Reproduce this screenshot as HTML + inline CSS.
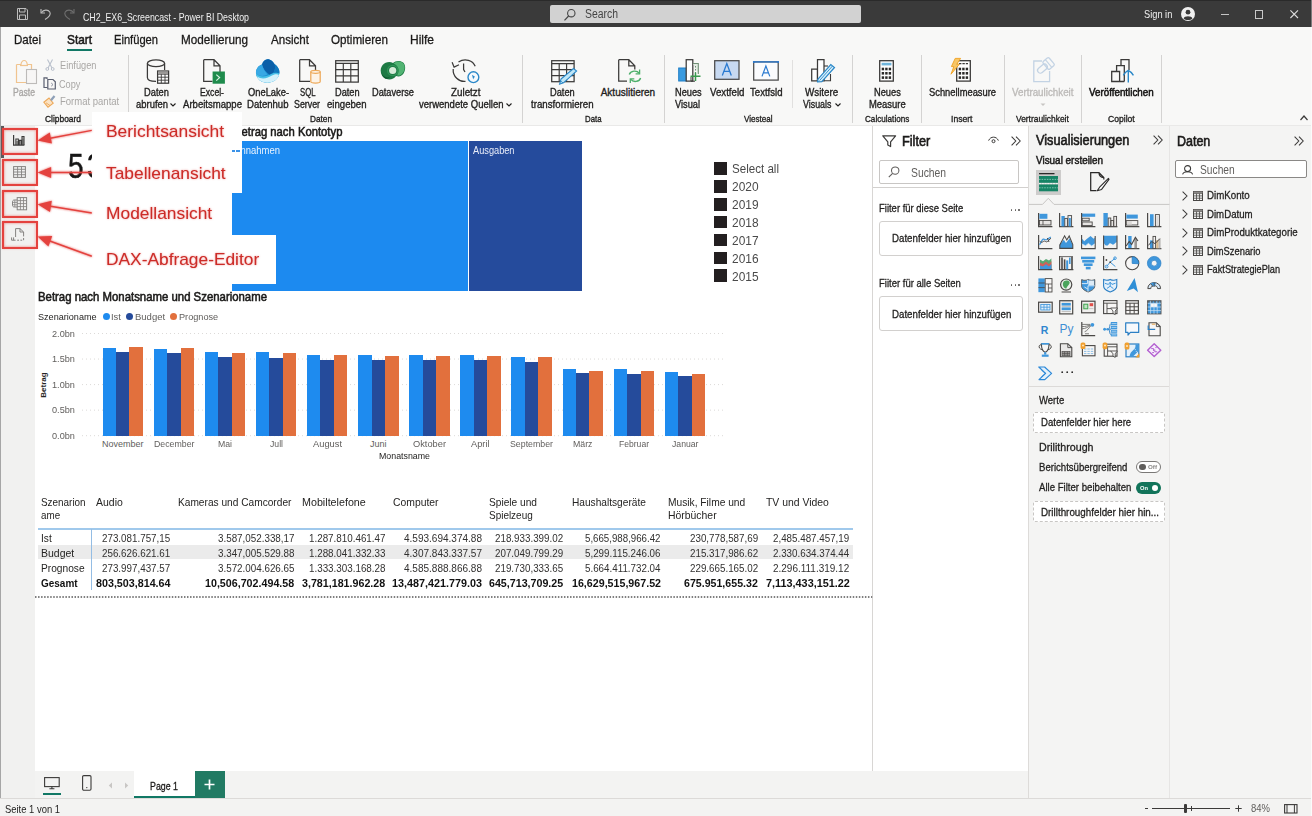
<!DOCTYPE html>
<html lang="de"><head><meta charset="utf-8"><title>CH2_EX6_Screencast - Power BI Desktop</title>
<style>
html,body{margin:0;padding:0;}
body{width:1312px;height:816px;overflow:hidden;position:relative;background:#f3f2f1;font-family:"Liberation Sans",sans-serif;}
.r{position:absolute;box-sizing:border-box;}
.t{position:absolute;white-space:nowrap;transform-origin:0 50%;}
svg{overflow:visible;}
</style></head><body>
<div class="r" style="left:0px;top:0px;width:1312px;height:27px;background:#3a3a3a;"></div>
<div class="r" style="left:0px;top:0px;width:1312px;height:1px;background:#2a2a2a;"></div>
<span class="t" style="left:83.00px;top:10.50px;font-size:10.5px;line-height:12.60px;color:#f0f0f0;transform:scaleX(0.8366);">CH2_EX6_Screencast - Power BI Desktop</span>
<div class="r" style="left:550px;top:4.6px;width:311px;height:18.3px;background:#d2d2d2;border-radius:2px;"></div>
<span class="t" style="left:585.00px;top:6.90px;font-size:12px;line-height:14.40px;color:#444;transform:scaleX(0.8679);">Search</span>
<svg class="r" style="left:563px;top:7.6px;" width="14" height="14" viewBox="0 0 14 14"><circle cx="8.3" cy="5.2" r="3.7" fill="none" stroke="#444" stroke-width="1.1"/><path d="M5.6 8 L1.5 12.3" stroke="#444" stroke-width="1.2" fill="none"/></svg>
<span class="t" style="left:1144.10px;top:8.20px;font-size:11px;line-height:13.20px;color:#f0f0f0;transform:scaleX(0.8414);">Sign in</span>
<svg class="r" style="left:1180.3px;top:6.4px;" width="16" height="16" viewBox="0 0 16 16"><circle cx="8" cy="8" r="7" fill="#f0f0f0"/><circle cx="8" cy="6.2" r="2.4" fill="#3a3a3a"/><path d="M3.6 12.6 C4.2 9.6 11.8 9.6 12.4 12.6 C10.5 14.6 5.5 14.6 3.6 12.6Z" fill="#3a3a3a"/></svg>
<div class="r" style="left:1221px;top:13.7px;width:8px;height:1.1px;background:#c4c4c4;"></div>
<div class="r" style="left:1254.8px;top:10.4px;width:8.2px;height:8.2px;border:1.2px solid #c8c8c8;"></div>
<svg class="r" style="left:1289.7px;top:10.4px;" width="8.4" height="8.4" viewBox="0 0 8.4 8.4"><path d="M0.4 0.4 L8 8 M8 0.4 L0.4 8" stroke="#dcdcdc" stroke-width="1.1"/></svg>
<svg class="r" style="left:17px;top:8px;" width="11" height="12" viewBox="0 0 11 12"><path d="M0.5 0.5 H9 L10.5 2 V11.5 H0.5 Z M2.5 0.5 V4 H8 V0.5 M2.5 11.5 V7 H8.5 V11.5" fill="none" stroke="#bdbdbd" stroke-width="1"/></svg>
<svg class="r" style="left:40px;top:8px;" width="12" height="12" viewBox="0 0 12 12"><path d="M1 1 V5 H5" fill="none" stroke="#bdbdbd" stroke-width="1.1"/><path d="M1.3 4.8 C3.5 1.5 8 1.2 9.8 4 C11.2 6.5 9 9 5 11.5" fill="none" stroke="#bdbdbd" stroke-width="1.1"/></svg>
<svg class="r" style="left:63px;top:8px;" width="12" height="12" viewBox="0 0 12 12"><path d="M11 1 V5 H7" fill="none" stroke="#6e6e6e" stroke-width="1.1"/><path d="M10.7 4.8 C8.5 1.5 4 1.2 2.2 4 C0.8 6.5 3 9 7 11.5" fill="none" stroke="#6e6e6e" stroke-width="1.1"/></svg>
<div class="r" style="left:0px;top:27px;width:1312px;height:99px;background:#f8f8f7;"></div>
<span class="t" style="left:14.00px;top:32.10px;font-size:13px;line-height:15.60px;color:#1b1a19;transform:scaleX(0.8897);-webkit-text-stroke:0.3px #1b1a19;">Datei</span>
<span class="t" style="left:67.00px;top:32.10px;font-size:13px;line-height:15.60px;color:#1b1a19;transform:scaleX(0.9106);-webkit-text-stroke:0.55px #1b1a19;">Start</span>
<span class="t" style="left:114.00px;top:32.10px;font-size:13px;line-height:15.60px;color:#1b1a19;transform:scaleX(0.8574);-webkit-text-stroke:0.3px #1b1a19;">Einfügen</span>
<span class="t" style="left:181.00px;top:32.10px;font-size:13px;line-height:15.60px;color:#1b1a19;transform:scaleX(0.9002);-webkit-text-stroke:0.3px #1b1a19;">Modellierung</span>
<span class="t" style="left:271.00px;top:32.10px;font-size:13px;line-height:15.60px;color:#1b1a19;transform:scaleX(0.8914);-webkit-text-stroke:0.3px #1b1a19;">Ansicht</span>
<span class="t" style="left:331.00px;top:32.10px;font-size:13px;line-height:15.60px;color:#1b1a19;transform:scaleX(0.8966);-webkit-text-stroke:0.3px #1b1a19;">Optimieren</span>
<span class="t" style="left:410.00px;top:32.10px;font-size:13px;line-height:15.60px;color:#1b1a19;transform:scaleX(0.9229);-webkit-text-stroke:0.3px #1b1a19;">Hilfe</span>
<div class="r" style="left:67.3px;top:49.1px;width:25px;height:2px;background:#117865;"></div>
<div class="r" style="left:0px;top:124.5px;width:1312px;height:2.2px;background:linear-gradient(#efefee,#d9d8d7);"></div>
<div class="r" style="left:128px;top:55px;width:1px;height:67.5px;background:#d4d3d2;"></div>
<div class="r" style="left:522px;top:55px;width:1px;height:67.5px;background:#d4d3d2;"></div>
<div class="r" style="left:664px;top:55px;width:1px;height:67.5px;background:#d4d3d2;"></div>
<div class="r" style="left:852px;top:55px;width:1px;height:67.5px;background:#d4d3d2;"></div>
<div class="r" style="left:921px;top:55px;width:1px;height:67.5px;background:#d4d3d2;"></div>
<div class="r" style="left:1004px;top:55px;width:1px;height:67.5px;background:#d4d3d2;"></div>
<div class="r" style="left:1080.5px;top:55px;width:1px;height:67.5px;background:#d4d3d2;"></div>
<div class="r" style="left:1161px;top:55px;width:1px;height:67.5px;background:#d4d3d2;"></div>
<div class="r" style="left:792.2px;top:59.5px;width:1px;height:48px;background:#e1e0df;"></div>
<div class="r" style="left:0px;top:126px;width:36px;height:672px;background:#f1f1f0;"></div>
<div class="r" style="left:0px;top:27px;width:1px;height:789px;background:#a6a6a6;"></div>
<div class="r" style="left:1px;top:126px;width:2.6px;height:32px;background:#555a5c;"></div>
<div class="r" style="left:34.6px;top:126px;width:837.4px;height:645.2px;background:#ffffff;"></div>
<div class="r" style="left:872px;top:126px;width:1px;height:672px;background:#d8d6d4;"></div>
<div class="r" style="left:873px;top:126px;width:155px;height:645.2px;background:#ffffff;"></div>
<div class="r" style="left:1028px;top:126px;width:1px;height:672px;background:#dddbd9;"></div>
<div class="r" style="left:1029px;top:126px;width:283px;height:672px;background:#f4f4f3;"></div>
<div class="r" style="left:1169px;top:126px;width:1px;height:672px;background:#e6e5e4;"></div>
<div class="r" style="left:34.6px;top:771.2px;width:993.4px;height:27px;background:#f3f3f2;"></div>
<div class="r" style="left:0px;top:798px;width:1312px;height:18px;background:#f3f3f2;"></div>
<div class="r" style="left:0px;top:798.2px;width:1312px;height:1px;background:#dcdad8;"></div>
<div class="r" style="left:1310.6px;top:0px;width:1.4px;height:27px;background:#7c7c7c;"></div>
<div class="r" style="left:1310.8px;top:27px;width:1.2px;height:789px;background:#fbfbfb;"></div>
<svg class="r" style="left:15px;top:59px;" width="23" height="26" viewBox="0 0 23 26"><path d="M1.5 5.5 H6 C6 3.5 7.5 1.5 9.2 1.5 C11 1.5 12 3.5 12.3 5.5 H16.5 V10 M1.5 5.5 V23.5 H11" fill="none" stroke="#f0c48f" stroke-width="1.2"/><path d="M5 6.5 H13" stroke="#f0c48f" stroke-width="1.2"/><rect x="11.5" y="10.5" width="10" height="14" fill="#f7f6f5" stroke="#bdbbb9" stroke-width="1.1"/></svg>
<span class="t" style="left:13.30px;top:86.50px;font-size:10px;line-height:12.00px;color:#a9a7a5;transform:scaleX(0.8603);-webkit-text-stroke:0.33px #a9a7a5;">Paste</span>
<svg class="r" style="left:45px;top:59px;" width="10" height="12" viewBox="0 0 10 12"><path d="M2.5 0.5 L7 9 M7.5 0.5 L3 9" stroke="#b9c0cc" stroke-width="1.1" fill="none"/><circle cx="2.3" cy="10" r="1.4" fill="none" stroke="#b9c0cc" stroke-width="1"/><circle cx="7.7" cy="10" r="1.4" fill="none" stroke="#b9c0cc" stroke-width="1"/></svg>
<span class="t" style="left:59.70px;top:59.80px;font-size:10px;line-height:12.00px;color:#a9a7a5;transform:scaleX(0.9220);">Einfügen</span>
<svg class="r" style="left:43px;top:76.5px;" width="14" height="13" viewBox="0 0 14 13"><path d="M4 2 V0.8 H1 V10.5 H4.5" fill="none" stroke="#5a5f70" stroke-width="1.2"/><path d="M4.8 2.5 H10 L12.3 4.8 V12 H4.8 Z" fill="#f7f6f5" stroke="#5a5f70" stroke-width="1.2"/><path d="M8.2 6 L10 7.6 L8.2 9.2" fill="none" stroke="#8a8f9e" stroke-width="1"/></svg>
<span class="t" style="left:59.30px;top:78.80px;font-size:10px;line-height:12.00px;color:#a9a7a5;transform:scaleX(0.9167);">Copy</span>
<svg class="r" style="left:43px;top:95px;" width="14" height="13" viewBox="0 0 14 13"><path d="M0.8 7.2 L6 3 L10.2 8.2 L5 12.2 Z" fill="#fbe3c4" stroke="#eda95a" stroke-width="1.1"/><path d="M8 5.2 L11.5 1" stroke="#8ea0b8" stroke-width="2.2"/><path d="M3 7.8 L7 10.5" stroke="#eda95a" stroke-width="0.9"/></svg>
<span class="t" style="left:59.70px;top:96.30px;font-size:10px;line-height:12.00px;color:#a9a7a5;transform:scaleX(0.9510);">Format pantat</span>
<span class="t" style="left:45.20px;top:114.10px;font-size:9px;line-height:10.80px;color:#1f1e1d;transform:scaleX(0.9345);-webkit-text-stroke:0.33px #1f1e1d;">Clipboard</span>
<svg class="r" style="left:146px;top:59px;" width="24" height="26" viewBox="0 0 24 26"><ellipse cx="10" cy="4.2" rx="8.6" ry="3.4" fill="none" stroke="#3b3a39" stroke-width="1.25"/><path d="M1.4 4.2 V18.5 C1.4 21 5 22.4 10 22.4 M18.6 4.2 V11" fill="none" stroke="#3b3a39" stroke-width="1.25"/><rect x="11.6" y="12" width="11" height="12.2" fill="#fff" stroke="#3b3a39" stroke-width="1.25"/><path d="M11.6 15.2 H22.6 M11.6 18.2 H22.6 M11.6 21.2 H22.6 M15.3 15.2 V24.2 M19 15.2 V24.2" stroke="#3b3a39" stroke-width="0.9"/><rect x="12.2" y="12.6" width="9.8" height="2.4" fill="#9a9896"/></svg>
<span class="t" style="left:143.70px;top:86.50px;font-size:10px;line-height:12.00px;color:#1f1e1d;transform:scaleX(0.9294);-webkit-text-stroke:0.33px #1f1e1d;">Daten</span>
<span class="t" style="left:135.50px;top:98.90px;font-size:10px;line-height:12.00px;color:#1f1e1d;transform:scaleX(0.9435);-webkit-text-stroke:0.33px #1f1e1d;">abrufen</span>
<svg class="r" style="left:170px;top:103.2px;" width="6" height="4" viewBox="0 0 6 4"><path d="M0.5 0.5 L3 3 L5.5 0.5" fill="none" stroke="#1f1e1d" stroke-width="1.1"/></svg>
<svg class="r" style="left:202.5px;top:59.3px;" width="23" height="26" viewBox="0 0 23 26"><path d="M0.7 0.7 H11 L17 6.8 V13 M0.7 0.7 V22.4 H9.5 M11 0.7 V6.8 H17" fill="none" stroke="#3b3a39" stroke-width="1.25"/><rect x="9.6" y="12.5" width="12.3" height="12.2" fill="#1f8b4c"/><path d="M13.3 15.6 L16.6 18.6 L13.3 21.6" fill="none" stroke="#d9f2e2" stroke-width="1.2"/></svg>
<span class="t" style="left:200.00px;top:86.50px;font-size:10px;line-height:12.00px;color:#1f1e1d;transform:scaleX(0.8638);-webkit-text-stroke:0.33px #1f1e1d;">Excel-</span>
<span class="t" style="left:182.50px;top:98.90px;font-size:10px;line-height:12.00px;color:#1f1e1d;transform:scaleX(0.9562);-webkit-text-stroke:0.33px #1f1e1d;">Arbeitsmappe</span>
<svg class="r" style="left:255px;top:59px;" width="26" height="25" viewBox="0 0 26 25"><path d="M12.5 0.3 C16 0.3 18 3 19.5 5 C23 7.5 25 11 24.3 14.5 C23.5 20 18 23.7 12.3 23.7 C6.5 23.7 1.5 20 1 14.5 C0.6 10 3.5 6.5 7 5.5 C8 2.5 10 0.3 12.5 0.3 Z" fill="#1d90d2"/><path d="M7 5.5 C8 2.5 10 0.3 12.5 0.3 C16 0.3 18 3 19.5 5 C21 9 19.5 14 15.5 16.5 C11 13.5 8 9.5 7 5.5Z" fill="#0b5fa8"/><path d="M19.5 5 C23 7.5 25 11 24.3 14.5 C21 13 17.5 15 15.5 16.5 C19.5 14 21 9 19.5 5Z" fill="#1279bf"/><path d="M7 5.5 C3.5 6.5 0.6 10 1 14.5 C4 17.5 9 17.5 12.5 15.5 C10 12.5 8 9.5 7 5.5Z" fill="#38a8e4"/><path d="M1 14.5 C5 19 12 17.5 16 15 C19 13.5 22.5 13.5 24.3 14.5 C23.5 20 18 23.7 12.3 23.7 C6.5 23.7 1.5 20 1 14.5Z" fill="#49c0e7"/><path d="M2 17.5 C7 21 13 19 17 16.5 C20 15 22.5 15 24 16 C22.5 21 17.5 23.7 12.3 23.7 C7.5 23.7 3.5 21.5 2 17.5Z" fill="#d4f1fb"/></svg>
<span class="t" style="left:247.50px;top:86.50px;font-size:10px;line-height:12.00px;color:#1f1e1d;transform:scaleX(0.9336);-webkit-text-stroke:0.33px #1f1e1d;">OneLake-</span>
<span class="t" style="left:247.45px;top:98.90px;font-size:10px;line-height:12.00px;color:#1f1e1d;transform:scaleX(0.9569);-webkit-text-stroke:0.33px #1f1e1d;">Datenhub</span>
<svg class="r" style="left:298.5px;top:59px;" width="24" height="26" viewBox="0 0 24 26"><path d="M0.7 0.7 H10.5 L16.5 6.8 V11 M0.7 0.7 V22.4 H11 M10.5 0.7 V6.8 H16.5" fill="none" stroke="#3b3a39" stroke-width="1.25"/><path d="M11.8 12.8 V22.6 C11.8 24.6 21.2 24.6 21.2 22.6 V12.8" fill="#fdf3e6" stroke="#eda95a" stroke-width="1.25"/><ellipse cx="16.5" cy="12.8" rx="4.7" ry="1.5" fill="#fdf3e6" stroke="#eda95a" stroke-width="1.25"/></svg>
<span class="t" style="left:299.55px;top:86.50px;font-size:10px;line-height:12.00px;color:#1f1e1d;transform:scaleX(0.7746);-webkit-text-stroke:0.33px #1f1e1d;">SQL</span>
<span class="t" style="left:294.40px;top:98.90px;font-size:10px;line-height:12.00px;color:#1f1e1d;transform:scaleX(0.8827);-webkit-text-stroke:0.33px #1f1e1d;">Server</span>
<svg class="r" style="left:334.5px;top:59.5px;" width="24" height="23" viewBox="0 0 24 23"><rect x="0.7" y="0.7" width="22.6" height="21.4" fill="none" stroke="#3b3a39" stroke-width="1.25"/><path d="M0.7 3.4 H23.3 M0.7 9.6 H23.3 M0.7 15.8 H23.3 M8.3 3.4 V22 M15.8 3.4 V22" stroke="#3b3a39" stroke-width="1.15"/></svg>
<span class="t" style="left:334.70px;top:86.50px;font-size:10px;line-height:12.00px;color:#1f1e1d;transform:scaleX(0.9219);-webkit-text-stroke:0.33px #1f1e1d;">Daten</span>
<span class="t" style="left:326.75px;top:98.90px;font-size:10px;line-height:12.00px;color:#1f1e1d;transform:scaleX(0.9598);-webkit-text-stroke:0.33px #1f1e1d;">eingeben</span>
<svg class="r" style="left:380px;top:61px;" width="26" height="20" viewBox="0 0 26 20"><path d="M1 12 C-1 4 7 -1 13 2 C16 -1 24 -1 25 5 C26 11 22 17 16 15 C13 20 3 20 1 12Z" fill="#1d7a44"/><path d="M13.5 2.5 C17 -1 24 0 24.6 5.5 C25 10 22 15.5 17 14.5 C20 10 19 5 13.5 2.5Z" fill="#52b473"/><path d="M1.3 11 C3 17 9 18 12 14 L8 17.5 C5 19 2 15 1.3 11Z" fill="#0f5a30"/><circle cx="12.7" cy="9.5" r="3.6" fill="#d6ecd9"/><circle cx="12.7" cy="9.5" r="5.2" fill="none" stroke="#2f9457" stroke-width="1.2"/></svg>
<span class="t" style="left:372.00px;top:86.50px;font-size:10px;line-height:12.00px;color:#1f1e1d;transform:scaleX(0.9215);-webkit-text-stroke:0.33px #1f1e1d;">Dataverse</span>
<svg class="r" style="left:452px;top:58px;" width="30" height="26" viewBox="0 0 30 26"><path d="M23.2 8.2 C21 2.5 13 -0.5 6.5 4 M1.2 11 C0.6 18.5 7 24.2 13.5 23.4" fill="none" stroke="#3b3a39" stroke-width="1.25"/><path d="M1 3.2 L1 8.6 L6.4 8.2" fill="none" stroke="#3b3a39" stroke-width="1.25" transform="rotate(-22 3 6)"/><path d="M11.6 5.5 V11.5 L13 14" fill="none" stroke="#3b3a39" stroke-width="1.25"/><circle cx="21.4" cy="19.2" r="5.4" fill="#f4f9fd" stroke="#2b88c8" stroke-width="1.4"/><path d="M20 16.8 L23 18.8 L21.8 20 L21.2 21.6 Z" fill="#2b88c8"/></svg>
<span class="t" style="left:450.95px;top:86.50px;font-size:10px;line-height:12.00px;color:#1f1e1d;transform:scaleX(0.9830);-webkit-text-stroke:0.33px #1f1e1d;">Zuletzt</span>
<span class="t" style="left:419.35px;top:98.90px;font-size:10px;line-height:12.00px;color:#1f1e1d;transform:scaleX(0.9500);-webkit-text-stroke:0.33px #1f1e1d;">verwendete Quellen</span>
<svg class="r" style="left:506px;top:103.2px;" width="6" height="4" viewBox="0 0 6 4"><path d="M0.5 0.5 L3 3 L5.5 0.5" fill="none" stroke="#1f1e1d" stroke-width="1.1"/></svg>
<span class="t" style="left:310.30px;top:114.00px;font-size:9px;line-height:10.80px;color:#1f1e1d;transform:scaleX(0.9160);-webkit-text-stroke:0.33px #1f1e1d;">Daten</span>
<svg class="r" style="left:550.5px;top:59.5px;" width="27" height="25" viewBox="0 0 27 25"><rect x="0.7" y="0.7" width="22.4" height="21" fill="none" stroke="#3b3a39" stroke-width="1.25"/><path d="M0.7 3.6 H23.1 M0.7 9.6 H23.1 M0.7 15.6 H23.1 M8.2 3.6 V21.7 M15.6 3.6 V21.7" stroke="#3b3a39" stroke-width="1.15"/><path d="M10 19 L22.5 8.5 L25.6 11 L12.5 22.8 L8.6 24.2 Z" fill="#bfe6f7" stroke="#2b88c8" stroke-width="1.1"/><path d="M9.2 20.5 L12 23" stroke="#2b88c8" stroke-width="0.9"/></svg>
<span class="t" style="left:549.95px;top:86.50px;font-size:10px;line-height:12.00px;color:#1f1e1d;transform:scaleX(0.9256);-webkit-text-stroke:0.33px #1f1e1d;">Daten</span>
<span class="t" style="left:531.00px;top:98.90px;font-size:10px;line-height:12.00px;color:#1f1e1d;transform:scaleX(0.9710);-webkit-text-stroke:0.33px #1f1e1d;">transformieren</span>
<svg class="r" style="left:618px;top:59.3px;" width="24" height="26" viewBox="0 0 24 26"><path d="M0.7 0.7 H10.8 L16.8 6.8 V10.5 M0.7 0.7 V22 H9 M10.8 0.7 V6.8 H16.8" fill="none" stroke="#3b3a39" stroke-width="1.25"/><path d="M11.3 15.5 C12.5 11.5 19 11 21 14.2" fill="none" stroke="#4caf6a" stroke-width="1.4"/><path d="M22.6 19 C21.4 23 15 23.6 13 20.4" fill="none" stroke="#4caf6a" stroke-width="1.4"/><path d="M21.6 10.6 V14.8 H17.6" fill="none" stroke="#4caf6a" stroke-width="1.3"/><path d="M12.3 24 V19.8 H16.3" fill="none" stroke="#4caf6a" stroke-width="1.3"/></svg>
<span class="t" style="left:600.70px;top:86.50px;font-size:10px;line-height:12.00px;color:#1f1e1d;-webkit-text-stroke:0.33px #1f1e1d;">Aktuslitieren</span>
<span class="t" style="left:584.95px;top:114.00px;font-size:9px;line-height:10.80px;color:#1f1e1d;transform:scaleX(0.8679);-webkit-text-stroke:0.33px #1f1e1d;">Data</span>
<svg class="r" style="left:677.5px;top:59px;" width="24" height="24" viewBox="0 0 24 24"><rect x="0.7" y="9" width="8" height="13" fill="#3a9be0" stroke="#1f7fc7" stroke-width="1"/><rect x="8.2" y="0.7" width="6.6" height="21.4" fill="#fff" stroke="#3b3a39" stroke-width="1.25"/><path d="M15 4.5 H20.3 V15" fill="#e3ece3" stroke="#6f8f75" stroke-width="1.1"/><path d="M17.5 7 V14" stroke="#6f8f75" stroke-width="1" stroke-dasharray="1.5 1.5"/><path d="M12.5 17.3 H22.5 M17.5 13.5 V22" stroke="#3a9a4f" stroke-width="1.5"/><path d="M13 18 V22.2 H17" fill="none" stroke="#3b3a39" stroke-width="1"/></svg>
<span class="t" style="left:674.65px;top:86.50px;font-size:10px;line-height:12.00px;color:#1f1e1d;transform:scaleX(0.9237);-webkit-text-stroke:0.33px #1f1e1d;">Neues</span>
<span class="t" style="left:675.30px;top:98.90px;font-size:10px;line-height:12.00px;color:#1f1e1d;transform:scaleX(0.9240);-webkit-text-stroke:0.33px #1f1e1d;">Visual</span>
<svg class="r" style="left:714px;top:60.3px;" width="26" height="20" viewBox="0 0 26 20"><rect x="0.7" y="0.7" width="24.3" height="18.6" fill="#c7d9f1" stroke="#4a4a4a" stroke-width="1.25"/><path d="M8.3 15.6 L12.8 3.6 L17.3 15.6 M9.9 11.4 H15.7" fill="none" stroke="#2a7ad0" stroke-width="1.3"/></svg>
<span class="t" style="left:709.55px;top:86.50px;font-size:10px;line-height:12.00px;color:#1f1e1d;transform:scaleX(0.9696);-webkit-text-stroke:0.33px #1f1e1d;">Vextfeld</span>
<svg class="r" style="left:753.3px;top:60.6px;" width="26" height="20" viewBox="0 0 26 20"><rect x="0.7" y="0.9" width="24.5" height="18.2" fill="#fafbfd" stroke="#4a4a4a" stroke-width="1.25"/><path d="M0.7 0.9 H25.2" stroke="#2a7ad0" stroke-width="1.3"/><circle cx="0.8" cy="0.9" r="1" fill="#2a7ad0"/><circle cx="25.1" cy="0.9" r="1" fill="#2a7ad0"/><path d="M9 15.4 L12.9 5 L16.8 15.4 M10.4 11.8 H15.4" fill="none" stroke="#2a7ad0" stroke-width="1.2"/></svg>
<span class="t" style="left:750.45px;top:86.50px;font-size:10px;line-height:12.00px;color:#1f1e1d;transform:scaleX(0.9587);-webkit-text-stroke:0.33px #1f1e1d;">Textfsld</span>
<span class="t" style="left:743.95px;top:114.00px;font-size:9px;line-height:10.80px;color:#1f1e1d;transform:scaleX(0.8946);-webkit-text-stroke:0.33px #1f1e1d;">Viesteal</span>
<svg class="r" style="left:810.5px;top:59px;" width="26" height="24" viewBox="0 0 26 24"><path d="M0.7 10 H6.5 V21.8 H0.7 Z" fill="#fff" stroke="#3b3a39" stroke-width="1.25"/><path d="M6.5 0.7 H13 V21.8 H6.5 Z" fill="#fff" stroke="#3b3a39" stroke-width="1.25"/><path d="M13 7 H17" stroke="#3b3a39" stroke-width="1.1"/><path d="M19.5 15 V21.8 H13" fill="none" stroke="#3b3a39" stroke-width="1.1"/><path d="M7 20.2 L19.8 5.5 L23.5 8.5 L10.8 22.6 L6.6 22.9 Z" fill="#d6effb" stroke="#2b88c8" stroke-width="1.2"/><path d="M8.6 21.5 L21.5 7" stroke="#2b88c8" stroke-width="0.9"/></svg>
<span class="t" style="left:805.35px;top:86.50px;font-size:10px;line-height:12.00px;color:#1f1e1d;transform:scaleX(0.9825);-webkit-text-stroke:0.33px #1f1e1d;">Wsitere</span>
<span class="t" style="left:803.20px;top:98.90px;font-size:10px;line-height:12.00px;color:#1f1e1d;transform:scaleX(0.8859);-webkit-text-stroke:0.33px #1f1e1d;">Visuals</span>
<svg class="r" style="left:834.7px;top:103.2px;" width="6" height="4" viewBox="0 0 6 4"><path d="M0.5 0.5 L3 3 L5.5 0.5" fill="none" stroke="#1f1e1d" stroke-width="1.1"/></svg>
<svg class="r" style="left:879px;top:60px;" width="15" height="22" viewBox="0 0 15 22"><rect x="0.7" y="0.7" width="13.6" height="20.4" fill="#fff" stroke="#3b3a39" stroke-width="1.3"/><rect x="2.6" y="2.8" width="9.8" height="2.6" fill="#6fb5dc"/><rect x="2.7" y="7.7" width="2.4" height="2.6" fill="#2b2a29"/><rect x="6.2" y="7.7" width="2.4" height="2.6" fill="#2b2a29"/><rect x="9.7" y="7.7" width="2.4" height="2.6" fill="#2b2a29"/><rect x="2.7" y="12.0" width="2.4" height="2.6" fill="#2b2a29"/><rect x="6.2" y="12.0" width="2.4" height="2.6" fill="#2b2a29"/><rect x="9.7" y="12.0" width="2.4" height="2.6" fill="#2b2a29"/><rect x="2.7" y="16.3" width="2.4" height="2.6" fill="#2b2a29"/><rect x="6.2" y="16.3" width="2.4" height="2.6" fill="#2b2a29"/><rect x="9.7" y="16.3" width="2.4" height="2.6" fill="#2b2a29"/></svg>
<span class="t" style="left:873.70px;top:86.50px;font-size:10px;line-height:12.00px;color:#1f1e1d;transform:scaleX(0.9271);-webkit-text-stroke:0.33px #1f1e1d;">Neues</span>
<span class="t" style="left:868.55px;top:98.90px;font-size:10px;line-height:12.00px;color:#1f1e1d;transform:scaleX(0.9433);-webkit-text-stroke:0.33px #1f1e1d;">Measure</span>
<span class="t" style="left:864.75px;top:114.00px;font-size:9px;line-height:10.80px;color:#1f1e1d;transform:scaleX(0.9036);-webkit-text-stroke:0.33px #1f1e1d;">Calculations</span>
<svg class="r" style="left:956.3px;top:60.3px;" width="15" height="22" viewBox="0 0 15 22"><rect x="0.7" y="0.7" width="13.6" height="20.4" fill="#fff" stroke="#3b3a39" stroke-width="1.3"/><path d="M3 3.6 H12" stroke="#3b3a39" stroke-width="1.4" stroke-dasharray="2.4 1"/><rect x="2.7" y="7.7" width="2.4" height="2.6" fill="#2b2a29"/><rect x="6.2" y="7.7" width="2.4" height="2.6" fill="#2b2a29"/><rect x="9.7" y="7.7" width="2.4" height="2.6" fill="#2b2a29"/><rect x="2.7" y="12.0" width="2.4" height="2.6" fill="#2b2a29"/><rect x="6.2" y="12.0" width="2.4" height="2.6" fill="#2b2a29"/><rect x="9.7" y="12.0" width="2.4" height="2.6" fill="#2b2a29"/><rect x="2.7" y="16.3" width="2.4" height="2.6" fill="#2b2a29"/><rect x="6.2" y="16.3" width="2.4" height="2.6" fill="#2b2a29"/><rect x="9.7" y="16.3" width="2.4" height="2.6" fill="#2b2a29"/></svg>
<svg class="r" style="left:950px;top:58px;" width="12" height="17" viewBox="0 0 12 17"><path d="M5.2 0.4 H10.6 L6.8 6.2 H9.4 L1 16.2 L3.8 8.6 H1.4 Z" fill="#f7c667" stroke="#f0a01e" stroke-width="0.9"/></svg>
<span class="t" style="left:929.00px;top:86.50px;font-size:10px;line-height:12.00px;color:#1f1e1d;transform:scaleX(0.9344);-webkit-text-stroke:0.33px #1f1e1d;">Schnellmeasure</span>
<span class="t" style="left:951.45px;top:114.00px;font-size:9px;line-height:10.80px;color:#1f1e1d;transform:scaleX(0.9552);-webkit-text-stroke:0.33px #1f1e1d;">Insert</span>
<svg class="r" style="left:1032.5px;top:58px;" width="23" height="25" viewBox="0 0 23 25"><path d="M9 3 H0.8 V23.6 H16.6 V13" fill="none" stroke="#c3d3e4" stroke-width="1.3"/><g transform="rotate(-40 12 9)"><rect x="3.5" y="5.8" width="11" height="5.6" rx="2.8" fill="none" stroke="#c3d3e4" stroke-width="1.3"/><rect x="13" y="3.6" width="8" height="10" rx="1.5" fill="none" stroke="#c3d3e4" stroke-width="1.3"/><path d="M17 3.6 V13.6" stroke="#c3d3e4" stroke-width="1.1"/></g></svg>
<span class="t" style="left:1011.75px;top:86.50px;font-size:10px;line-height:12.00px;color:#bcbab8;transform:scaleX(0.9791);-webkit-text-stroke:0.33px #bcbab8;">Vertraulichkeit</span>
<svg class="r" style="left:1039.5px;top:103.3px;" width="6" height="4" viewBox="0 0 6 4"><path d="M0.5 0.5 L3 3 L5.5 0.5 Z" fill="#c8c6c4"/></svg>
<span class="t" style="left:1015.80px;top:114.00px;font-size:9px;line-height:10.80px;color:#1f1e1d;transform:scaleX(0.9341);-webkit-text-stroke:0.33px #1f1e1d;">Vertraulichkeit</span>
<svg class="r" style="left:1111px;top:59px;" width="24" height="25" viewBox="0 0 24 25"><path d="M10 6.6 V0.7 H18 V11" fill="none" stroke="#3b3a39" stroke-width="1.3"/><path d="M5.6 12.5 V6.6 H13.3 V22.5" fill="none" stroke="#3b3a39" stroke-width="1.3"/><path d="M0.7 12.5 H8.6 V22.5 H0.7 Z M8.6 22.5 H13.3" fill="none" stroke="#3b3a39" stroke-width="1.3"/><path d="M17.3 23.4 V11.6 M12.3 16.4 C14 13.5 15.5 12.3 17.3 11.4 C19.2 12.3 20.8 13.5 22.4 16.4" fill="none" stroke="#2b88c8" stroke-width="1.4"/></svg>
<span class="t" style="left:1088.65px;top:86.50px;font-size:10px;line-height:12.00px;color:#141312;transform:scaleX(0.9806);-webkit-text-stroke:0.5px #141312;">Veröffentlichen</span>
<span class="t" style="left:1107.95px;top:114.00px;font-size:9px;line-height:10.80px;color:#1f1e1d;transform:scaleX(0.9531);-webkit-text-stroke:0.33px #1f1e1d;">Copilot</span>
<svg class="r" style="left:1299.5px;top:115px;" width="8" height="6" viewBox="0 0 8 6"><path d="M0.5 5 L4 1 L7.5 5" fill="none" stroke="#3b3a39" stroke-width="1.2"/></svg>
<span class="t" style="left:67.50px;top:144.90px;font-size:35px;line-height:42.00px;color:#161616;transform:scaleX(0.8000);-webkit-text-stroke:0.5px #161616;">5</span>
<span class="t" style="left:87.00px;top:144.90px;font-size:35px;line-height:42.00px;color:#161616;transform:scaleX(0.8000);-webkit-text-stroke:0.5px #161616;">3</span>
<span class="t" style="left:233.60px;top:124.80px;font-size:12px;line-height:14.40px;color:#1b1a19;transform:scaleX(0.9392);-webkit-text-stroke:0.55px #1b1a19;">Betrag nach Kontotyp</span>
<div class="r" style="left:231.6px;top:141.2px;width:236.4px;height:149.4px;background:#1c8af0;"></div>
<div class="r" style="left:469.2px;top:141.2px;width:112.9px;height:149.4px;background:#254b9c;"></div>
<span class="t" style="left:232.00px;top:144.50px;font-size:10px;line-height:12.00px;color:#e8f3ff;transform:scaleX(0.9487);">Einnahmen</span>
<span class="t" style="left:472.50px;top:144.50px;font-size:10px;line-height:12.00px;color:#e8ecf8;transform:scaleX(0.9214);">Ausgaben</span>
<div class="r" style="left:714px;top:162.2px;width:12.9px;height:12.7px;background:#231f20;"></div>
<span class="t" style="left:732.00px;top:161.30px;font-size:13px;line-height:15.60px;color:#4a4a4a;transform:scaleX(0.8910);">Select all</span>
<div class="r" style="left:714px;top:180.07px;width:12.9px;height:12.7px;background:#231f20;"></div>
<span class="t" style="left:732.00px;top:179.17px;font-size:13px;line-height:15.60px;color:#4a4a4a;transform:scaleX(0.9164);">2020</span>
<div class="r" style="left:714px;top:197.94px;width:12.9px;height:12.7px;background:#231f20;"></div>
<span class="t" style="left:732.00px;top:197.04px;font-size:13px;line-height:15.60px;color:#4a4a4a;transform:scaleX(0.9164);">2019</span>
<div class="r" style="left:714px;top:215.81px;width:12.9px;height:12.7px;background:#231f20;"></div>
<span class="t" style="left:732.00px;top:214.91px;font-size:13px;line-height:15.60px;color:#4a4a4a;transform:scaleX(0.9164);">2018</span>
<div class="r" style="left:714px;top:233.68px;width:12.9px;height:12.7px;background:#231f20;"></div>
<span class="t" style="left:732.00px;top:232.78px;font-size:13px;line-height:15.60px;color:#4a4a4a;transform:scaleX(0.9164);">2017</span>
<div class="r" style="left:714px;top:251.55px;width:12.9px;height:12.7px;background:#231f20;"></div>
<span class="t" style="left:732.00px;top:250.65px;font-size:13px;line-height:15.60px;color:#4a4a4a;transform:scaleX(0.9164);">2016</span>
<div class="r" style="left:714px;top:269.41999999999996px;width:12.9px;height:12.7px;background:#231f20;"></div>
<span class="t" style="left:732.00px;top:268.52px;font-size:13px;line-height:15.60px;color:#4a4a4a;transform:scaleX(0.9164);">2015</span>
<span class="t" style="left:38.40px;top:290.00px;font-size:12px;line-height:14.40px;color:#1b1a19;transform:scaleX(0.9483);-webkit-text-stroke:0.55px #1b1a19;">Betrag nach Monatsname und Szenarioname</span>
<span class="t" style="left:38.40px;top:311.50px;font-size:9px;line-height:10.80px;color:#252423;transform:scaleX(1.0097);">Szenarioname</span>
<div class="r" style="left:102.80000000000001px;top:313.2px;width:7.2px;height:7.2px;background:#1e8bef;border-radius:50%;"></div>
<div class="r" style="left:125.5px;top:313.2px;width:7.2px;height:7.2px;background:#254b9b;border-radius:50%;"></div>
<div class="r" style="left:169.5px;top:313.2px;width:7.2px;height:7.2px;background:#e2703d;border-radius:50%;"></div>
<span class="t" style="left:111.30px;top:311.50px;font-size:9px;line-height:10.80px;color:#605e5c;transform:scaleX(1.0419);">Ist</span>
<span class="t" style="left:134.70px;top:311.50px;font-size:9px;line-height:10.80px;color:#605e5c;transform:scaleX(1.0552);">Budget</span>
<span class="t" style="left:178.70px;top:311.50px;font-size:9px;line-height:10.80px;color:#605e5c;transform:scaleX(1.0175);">Prognose</span>
<span class="t" style="left:52.30px;top:328.50px;font-size:9px;line-height:10.80px;color:#605e5c;transform:scaleX(1.0168);">2.0bn</span>
<span class="t" style="left:52.30px;top:354.05px;font-size:9px;line-height:10.80px;color:#605e5c;transform:scaleX(1.0168);">1.5bn</span>
<span class="t" style="left:52.30px;top:379.60px;font-size:9px;line-height:10.80px;color:#605e5c;transform:scaleX(1.0168);">1.0bn</span>
<span class="t" style="left:52.30px;top:405.15px;font-size:9px;line-height:10.80px;color:#605e5c;transform:scaleX(1.0168);">0.5bn</span>
<span class="t" style="left:52.30px;top:430.70px;font-size:9px;line-height:10.80px;color:#605e5c;transform:scaleX(1.0168);">0.0bn</span>
<svg class="r" style="left:0px;top:332.7px;" width="730" height="104" viewBox="0 0 730 104"><path d="M82 0.50 H726" stroke="#dcdad8" stroke-width="1" stroke-dasharray="1 3"/><path d="M82 26.05 H726" stroke="#dcdad8" stroke-width="1" stroke-dasharray="1 3"/><path d="M82 51.60 H726" stroke="#dcdad8" stroke-width="1" stroke-dasharray="1 3"/><path d="M82 77.15 H726" stroke="#dcdad8" stroke-width="1" stroke-dasharray="1 3"/><path d="M82 102.70 H726" stroke="#dcdad8" stroke-width="1" stroke-dasharray="1 3"/></svg>
<span class="t" style="left:0.00px;top:-4.80px;font-size:8px;line-height:9.60px;color:#252423;font-weight:bold;left:43.6px;top:384.8px;transform:translate(-50%,-50%) rotate(-90deg);transform-origin:50% 50%;">Betrag</span>
<div class="r" style="left:102.5px;top:347.9px;width:13.5px;height:88.0px;background:#1e8bef;"></div>
<div class="r" style="left:115.95px;top:352.2px;width:13.5px;height:83.7px;background:#254b9b;"></div>
<div class="r" style="left:129.4px;top:347.4px;width:13.5px;height:88.5px;background:#e2703d;"></div>
<span class="t" style="left:101.95px;top:438.90px;font-size:9px;line-height:10.80px;color:#605e5c;">November</span>
<div class="r" style="left:153.62px;top:348.5px;width:13.5px;height:87.4px;background:#1e8bef;"></div>
<div class="r" style="left:167.07px;top:352.8px;width:13.5px;height:83.1px;background:#254b9b;"></div>
<div class="r" style="left:180.52px;top:348.1px;width:13.5px;height:87.8px;background:#e2703d;"></div>
<span class="t" style="left:153.57px;top:438.90px;font-size:9px;line-height:10.80px;color:#605e5c;transform:scaleX(0.9756);">December</span>
<div class="r" style="left:204.74px;top:351.8px;width:13.5px;height:84.1px;background:#1e8bef;"></div>
<div class="r" style="left:218.19px;top:356.8px;width:13.5px;height:79.1px;background:#254b9b;"></div>
<div class="r" style="left:231.64px;top:352.5px;width:13.5px;height:83.4px;background:#e2703d;"></div>
<span class="t" style="left:217.94px;top:438.90px;font-size:9px;line-height:10.80px;color:#605e5c;transform:scaleX(0.9654);">Mai</span>
<div class="r" style="left:255.86px;top:351.8px;width:13.5px;height:84.1px;background:#1e8bef;"></div>
<div class="r" style="left:269.31px;top:358.2px;width:13.5px;height:77.7px;background:#254b9b;"></div>
<div class="r" style="left:282.76px;top:353.2px;width:13.5px;height:82.7px;background:#e2703d;"></div>
<span class="t" style="left:269.56px;top:438.90px;font-size:9px;line-height:10.80px;color:#605e5c;transform:scaleX(0.9627);">Jull</span>
<div class="r" style="left:306.98px;top:354.5px;width:13.5px;height:81.4px;background:#1e8bef;"></div>
<div class="r" style="left:320.43px;top:359.9px;width:13.5px;height:76.0px;background:#254b9b;"></div>
<div class="r" style="left:333.88px;top:355.2px;width:13.5px;height:80.7px;background:#e2703d;"></div>
<span class="t" style="left:312.68px;top:438.90px;font-size:9px;line-height:10.80px;color:#605e5c;transform:scaleX(1.0350);">August</span>
<div class="r" style="left:358.1px;top:354.8px;width:13.5px;height:81.1px;background:#1e8bef;"></div>
<div class="r" style="left:371.55px;top:359.9px;width:13.5px;height:76.0px;background:#254b9b;"></div>
<div class="r" style="left:385.0px;top:355.5px;width:13.5px;height:80.4px;background:#e2703d;"></div>
<span class="t" style="left:370.05px;top:438.90px;font-size:9px;line-height:10.80px;color:#605e5c;">Juni</span>
<div class="r" style="left:409.22px;top:354.8px;width:13.5px;height:81.1px;background:#1e8bef;"></div>
<div class="r" style="left:422.67px;top:360.2px;width:13.5px;height:75.7px;background:#254b9b;"></div>
<div class="r" style="left:436.12px;top:355.8px;width:13.5px;height:80.1px;background:#e2703d;"></div>
<span class="t" style="left:412.92px;top:438.90px;font-size:9px;line-height:10.80px;color:#605e5c;transform:scaleX(1.0308);">Oktober</span>
<div class="r" style="left:460.34px;top:355.2px;width:13.5px;height:80.7px;background:#1e8bef;"></div>
<div class="r" style="left:473.79px;top:359.9px;width:13.5px;height:76.0px;background:#254b9b;"></div>
<div class="r" style="left:487.24px;top:355.8px;width:13.5px;height:80.1px;background:#e2703d;"></div>
<span class="t" style="left:471.29px;top:438.90px;font-size:9px;line-height:10.80px;color:#605e5c;transform:scaleX(1.0276);">April</span>
<div class="r" style="left:511.46px;top:356.8px;width:13.5px;height:79.1px;background:#1e8bef;"></div>
<div class="r" style="left:524.91px;top:361.5px;width:13.5px;height:74.4px;background:#254b9b;"></div>
<div class="r" style="left:538.36px;top:356.8px;width:13.5px;height:79.1px;background:#e2703d;"></div>
<span class="t" style="left:510.16px;top:438.90px;font-size:9px;line-height:10.80px;color:#605e5c;transform:scaleX(0.9767);">September</span>
<div class="r" style="left:562.58px;top:368.6px;width:13.5px;height:67.3px;background:#1e8bef;"></div>
<div class="r" style="left:576.03px;top:373.3px;width:13.5px;height:62.6px;background:#254b9b;"></div>
<div class="r" style="left:589.48px;top:370.9px;width:13.5px;height:65.0px;background:#e2703d;"></div>
<span class="t" style="left:573.03px;top:438.90px;font-size:9px;line-height:10.80px;color:#605e5c;transform:scaleX(0.9750);">März</span>
<div class="r" style="left:613.7px;top:368.9px;width:13.5px;height:67.0px;background:#1e8bef;"></div>
<div class="r" style="left:627.15px;top:373.6px;width:13.5px;height:62.3px;background:#254b9b;"></div>
<div class="r" style="left:640.6px;top:371.3px;width:13.5px;height:64.6px;background:#e2703d;"></div>
<span class="t" style="left:618.90px;top:438.90px;font-size:9px;line-height:10.80px;color:#605e5c;transform:scaleX(0.9520);">Februar</span>
<div class="r" style="left:664.82px;top:371.9px;width:13.5px;height:64.0px;background:#1e8bef;"></div>
<div class="r" style="left:678.27px;top:376.3px;width:13.5px;height:59.6px;background:#254b9b;"></div>
<div class="r" style="left:691.72px;top:374.0px;width:13.5px;height:61.9px;background:#e2703d;"></div>
<span class="t" style="left:671.77px;top:438.90px;font-size:9px;line-height:10.80px;color:#605e5c;transform:scaleX(0.9630);">Januar</span>
<span class="t" style="left:378.50px;top:450.60px;font-size:9px;line-height:10.80px;color:#252423;transform:scaleX(0.9803);">Monatsname</span>
<span class="t" style="left:41.30px;top:495.90px;font-size:11.5px;line-height:13.80px;color:#252423;transform:scaleX(0.8613);">Szenarion</span>
<span class="t" style="left:41.30px;top:508.70px;font-size:11.5px;line-height:13.80px;color:#252423;transform:scaleX(0.8538);">ame</span>
<span class="t" style="left:96.00px;top:495.90px;font-size:11.5px;line-height:13.80px;color:#252423;transform:scaleX(0.9112);">Audio</span>
<span class="t" style="left:177.90px;top:495.90px;font-size:11.5px;line-height:13.80px;color:#252423;transform:scaleX(0.8827);">Kameras und Camcorder</span>
<span class="t" style="left:302.00px;top:495.90px;font-size:11.5px;line-height:13.80px;color:#252423;transform:scaleX(0.9327);">Mobiltelefone</span>
<span class="t" style="left:392.60px;top:495.90px;font-size:11.5px;line-height:13.80px;color:#252423;transform:scaleX(0.9011);">Computer</span>
<span class="t" style="left:489.30px;top:495.90px;font-size:11.5px;line-height:13.80px;color:#252423;transform:scaleX(0.8831);">Spiele und</span>
<span class="t" style="left:489.30px;top:508.70px;font-size:11.5px;line-height:13.80px;color:#252423;transform:scaleX(0.8652);">Spielzeug</span>
<span class="t" style="left:571.50px;top:495.90px;font-size:11.5px;line-height:13.80px;color:#252423;transform:scaleX(0.8824);">Haushaltsgeräte</span>
<span class="t" style="left:668.20px;top:495.90px;font-size:11.5px;line-height:13.80px;color:#252423;transform:scaleX(0.8882);">Musik, Filme und</span>
<span class="t" style="left:668.20px;top:508.70px;font-size:11.5px;line-height:13.80px;color:#252423;transform:scaleX(0.9051);">Hörbücher</span>
<span class="t" style="left:765.50px;top:495.90px;font-size:11.5px;line-height:13.80px;color:#252423;transform:scaleX(0.9039);">TV und Video</span>
<div class="r" style="left:38.2px;top:545px;width:814.6px;height:14.2px;background:#ebebeb;"></div>
<div class="r" style="left:38.2px;top:528.3px;width:814.6px;height:1.3px;background:#a0c9ec;"></div>
<div class="r" style="left:90.8px;top:529px;width:1.2px;height:60.5px;background:#94bde4;"></div>
<span class="t" style="left:41.30px;top:531.80px;font-size:11px;line-height:13.20px;color:#252423;transform:scaleX(0.9214);">Ist</span>
<span class="t" style="left:102.30px;top:531.80px;font-size:11px;line-height:13.20px;color:#323130;transform:scaleX(0.8919);">273.081.757,15</span>
<span class="t" style="left:218.10px;top:531.80px;font-size:11px;line-height:13.20px;color:#323130;transform:scaleX(0.8933);">3.587,052.338,17</span>
<span class="t" style="left:308.70px;top:531.80px;font-size:11px;line-height:13.20px;color:#323130;transform:scaleX(0.8933);">1.287.810.461.47</span>
<span class="t" style="left:404.00px;top:531.80px;font-size:11px;line-height:13.20px;color:#323130;transform:scaleX(0.9108);">4.593.694.374.88</span>
<span class="t" style="left:495.40px;top:531.80px;font-size:11px;line-height:13.20px;color:#323130;transform:scaleX(0.8906);">218.933.399.02</span>
<span class="t" style="left:585.00px;top:531.80px;font-size:11px;line-height:13.20px;color:#323130;transform:scaleX(0.8816);">5,665,988,966.42</span>
<span class="t" style="left:690.00px;top:531.80px;font-size:11px;line-height:13.20px;color:#323130;transform:scaleX(0.8906);">230,778,587,69</span>
<span class="t" style="left:773.20px;top:531.80px;font-size:11px;line-height:13.20px;color:#323130;transform:scaleX(0.8898);">2,485.487.457,19</span>
<span class="t" style="left:41.30px;top:546.60px;font-size:11px;line-height:13.20px;color:#252423;transform:scaleX(0.9522);">Budget</span>
<span class="t" style="left:102.30px;top:546.60px;font-size:11px;line-height:13.20px;color:#323130;transform:scaleX(0.8919);">256.626.621.61</span>
<span class="t" style="left:218.10px;top:546.60px;font-size:11px;line-height:13.20px;color:#323130;transform:scaleX(0.8933);">3.347,005.529.88</span>
<span class="t" style="left:308.70px;top:546.60px;font-size:11px;line-height:13.20px;color:#323130;transform:scaleX(0.8933);">1.288.041.332.33</span>
<span class="t" style="left:404.00px;top:546.60px;font-size:11px;line-height:13.20px;color:#323130;transform:scaleX(0.9108);">4.307.843.337.57</span>
<span class="t" style="left:495.40px;top:546.60px;font-size:11px;line-height:13.20px;color:#323130;transform:scaleX(0.8906);">207.049.799.29</span>
<span class="t" style="left:585.00px;top:546.60px;font-size:11px;line-height:13.20px;color:#323130;transform:scaleX(0.8901);">5,299.115.246.06</span>
<span class="t" style="left:690.00px;top:546.60px;font-size:11px;line-height:13.20px;color:#323130;transform:scaleX(0.8906);">215.317,986.62</span>
<span class="t" style="left:773.20px;top:546.60px;font-size:11px;line-height:13.20px;color:#323130;transform:scaleX(0.8898);">2.330.634.374.44</span>
<span class="t" style="left:41.30px;top:561.70px;font-size:11px;line-height:13.20px;color:#252423;transform:scaleX(0.9259);">Prognose</span>
<span class="t" style="left:102.30px;top:561.70px;font-size:11px;line-height:13.20px;color:#323130;transform:scaleX(0.8919);">273.997,437.57</span>
<span class="t" style="left:218.10px;top:561.70px;font-size:11px;line-height:13.20px;color:#323130;transform:scaleX(0.8933);">3.572.004.626.65</span>
<span class="t" style="left:308.70px;top:561.70px;font-size:11px;line-height:13.20px;color:#323130;transform:scaleX(0.8933);">1.333.303.168.28</span>
<span class="t" style="left:404.00px;top:561.70px;font-size:11px;line-height:13.20px;color:#323130;transform:scaleX(0.9108);">4.585.888.866.88</span>
<span class="t" style="left:495.40px;top:561.70px;font-size:11px;line-height:13.20px;color:#323130;transform:scaleX(0.8906);">219.730,333.65</span>
<span class="t" style="left:585.00px;top:561.70px;font-size:11px;line-height:13.20px;color:#323130;transform:scaleX(0.8901);">5.664.411.732.04</span>
<span class="t" style="left:690.00px;top:561.70px;font-size:11px;line-height:13.20px;color:#323130;transform:scaleX(0.8906);">229.665.165.02</span>
<span class="t" style="left:773.20px;top:561.70px;font-size:11px;line-height:13.20px;color:#323130;transform:scaleX(0.9071);">2.296.111.319.12</span>
<span class="t" style="left:41.30px;top:576.80px;font-size:11px;line-height:13.20px;color:#111;font-weight:bold;transform:scaleX(0.9070);">Gesamt</span>
<span class="t" style="left:96.00px;top:576.80px;font-size:11px;line-height:13.20px;color:#111;font-weight:bold;transform:scaleX(0.9743);">803,503,814.64</span>
<span class="t" style="left:205.40px;top:576.80px;font-size:11px;line-height:13.20px;color:#111;font-weight:bold;transform:scaleX(0.9721);">10,506,702.494.58</span>
<span class="t" style="left:302.00px;top:576.80px;font-size:11px;line-height:13.20px;color:#111;font-weight:bold;transform:scaleX(0.9715);">3,781,181.962.28</span>
<span class="t" style="left:392.00px;top:576.80px;font-size:11px;line-height:13.20px;color:#111;font-weight:bold;transform:scaleX(0.9808);">13,487,421.779.03</span>
<span class="t" style="left:489.30px;top:576.80px;font-size:11px;line-height:13.20px;color:#111;font-weight:bold;transform:scaleX(0.9704);">645,713,709.25</span>
<span class="t" style="left:571.50px;top:576.80px;font-size:11px;line-height:13.20px;color:#111;font-weight:bold;transform:scaleX(0.9699);">16,629,515,967.52</span>
<span class="t" style="left:684.30px;top:576.80px;font-size:11px;line-height:13.20px;color:#111;font-weight:bold;transform:scaleX(0.9651);">675.951,655.32</span>
<span class="t" style="left:765.50px;top:576.80px;font-size:11px;line-height:13.20px;color:#111;font-weight:bold;transform:scaleX(0.9867);">7,113,433,151.22</span>
<svg class="r" style="left:34.8px;top:596px;" width="837.2" height="2" viewBox="0 0 837.2 2"><path d="M0 1 H837.2" stroke="#555" stroke-width="1.5" stroke-dasharray="1.5 1.54"/></svg>
<svg class="r" style="left:882px;top:134.5px;" width="15" height="13" viewBox="0 0 15 13"><path d="M0.8 0.8 H13.6 L8.6 6.8 V11.6 L5.8 10 V6.8 Z" fill="none" stroke="#3b3a39" stroke-width="1.2" stroke-linejoin="round"/></svg>
<span class="t" style="left:901.60px;top:132.90px;font-size:14px;line-height:16.80px;color:#1b1a19;transform:scaleX(0.9097);-webkit-text-stroke:0.6px #1b1a19;">Filter</span>
<svg class="r" style="left:987.5px;top:135.5px;" width="11" height="8" viewBox="0 0 11 8"><path d="M0.6 4.6 C2.5 0 8.5 0 10.4 4.6" fill="none" stroke="#3b3a39" stroke-width="1"/><circle cx="5.5" cy="5.2" r="1.5" fill="none" stroke="#3b3a39" stroke-width="1"/></svg>
<svg class="r" style="left:1011.1px;top:135.7px;" width="10" height="10" viewBox="0 0 10 10"><path d="M0.6 0.6 L4.8 5 L0.6 9.4 M5 0.6 L9.2 5 L5 9.4" fill="none" stroke="#3b3a39" stroke-width="1.05"/></svg>
<div class="r" style="left:878.9px;top:160.4px;width:140px;height:23.5px;background:#fff;border:1px solid #c8c6c4;border-radius:2px;"></div>
<svg class="r" style="left:888px;top:166px;" width="12" height="12" viewBox="0 0 12 12"><circle cx="7.2" cy="4.6" r="3.7" fill="none" stroke="#605e5c" stroke-width="1.05"/><path d="M4.6 7.3 L0.8 11.2" stroke="#605e5c" stroke-width="1.1"/></svg>
<span class="t" style="left:910.50px;top:164.70px;font-size:13px;line-height:15.60px;color:#605e5c;transform:scaleX(0.7961);">Suchen</span>
<div class="r" style="left:873px;top:187px;width:155px;height:1px;background:#d2d0ce;"></div>
<span class="t" style="left:879.40px;top:201.60px;font-size:11px;line-height:13.20px;color:#201f1e;transform:scaleX(0.8608);-webkit-text-stroke:0.3px #201f1e;">Fiiter für diese Seite</span>
<span class="t" style="left:879.40px;top:276.60px;font-size:11px;line-height:13.20px;color:#201f1e;transform:scaleX(0.8632);-webkit-text-stroke:0.3px #201f1e;">Fiiter für alle Seiten</span>
<div class="r" style="left:1010.6px;top:209.10000000000002px;width:1.5px;height:1.5px;background:#605e5c;border-radius:50%;"></div>
<div class="r" style="left:1014.5px;top:209.10000000000002px;width:1.5px;height:1.5px;background:#605e5c;border-radius:50%;"></div>
<div class="r" style="left:1018.4px;top:209.10000000000002px;width:1.5px;height:1.5px;background:#605e5c;border-radius:50%;"></div>
<div class="r" style="left:1010.6px;top:284.1px;width:1.5px;height:1.5px;background:#605e5c;border-radius:50%;"></div>
<div class="r" style="left:1014.5px;top:284.1px;width:1.5px;height:1.5px;background:#605e5c;border-radius:50%;"></div>
<div class="r" style="left:1018.4px;top:284.1px;width:1.5px;height:1.5px;background:#605e5c;border-radius:50%;"></div>
<div class="r" style="left:878.9px;top:220.5px;width:144.1px;height:35.2px;background:#fff;border:1px solid #d2d0ce;border-radius:3px;"></div>
<span class="t" style="left:891.60px;top:232.10px;font-size:11px;line-height:13.20px;color:#201f1e;transform:scaleX(0.8827);-webkit-text-stroke:0.3px #201f1e;">Datenfelder hier hinzufügen</span>
<div class="r" style="left:878.9px;top:296.1px;width:144.1px;height:35.2px;background:#fff;border:1px solid #d2d0ce;border-radius:3px;"></div>
<span class="t" style="left:891.60px;top:307.70px;font-size:11px;line-height:13.20px;color:#201f1e;transform:scaleX(0.8827);-webkit-text-stroke:0.3px #201f1e;">Datenfelder hier hinzufügen</span>
<span class="t" style="left:1036.10px;top:132.30px;font-size:14px;line-height:16.80px;color:#1b1a19;transform:scaleX(0.9114);-webkit-text-stroke:0.6px #1b1a19;">Visualisierungen</span>
<svg class="r" style="left:1153.1px;top:135.2px;" width="10" height="10" viewBox="0 0 10 10"><path d="M0.6 0.6 L4.8 5 L0.6 9.4 M5 0.6 L9.2 5 L5 9.4" fill="none" stroke="#3b3a39" stroke-width="1.05"/></svg>
<span class="t" style="left:1036.10px;top:154.40px;font-size:11px;line-height:13.20px;color:#1b1a19;transform:scaleX(0.9019);-webkit-text-stroke:0.5px #1b1a19;">Visual ersteilen</span>
<div class="r" style="left:1035.7px;top:169.7px;width:25.2px;height:25px;background:#cdcccb;"></div>
<svg class="r" style="left:1038.8px;top:172.9px;" width="19" height="18.3" viewBox="0 0 19 18.3"><rect x="0" y="0" width="15.5" height="1.3" fill="#2b2a29"/><rect x="0" y="3" width="19" height="6.8" fill="#178466"/><rect x="0" y="11.4" width="19" height="6.9" fill="#178466"/><path d="M0 6.4 H19 M0 14.8 H19" stroke="#8fd0bd" stroke-width="0.8" stroke-dasharray="1.6 1"/><path d="M0 10.6 H19" stroke="#eef7f4" stroke-width="1" stroke-dasharray="2 0.8"/></svg>
<svg class="r" style="left:1089.5px;top:172.3px;" width="20" height="20" viewBox="0 0 20 20"><path d="M6.4 18.6 H0.7 V0.7 H9 L13.8 5.6 V7.5 M9 0.7 C9 3.2 10.5 5.6 13.8 5.6" fill="none" stroke="#2b2a29" stroke-width="1.25"/><path d="M7.2 18.8 L9.6 15.2 L18.4 6.4 L19 7.4 L11.6 17.4 Z" fill="#fff" stroke="#2b2a29" stroke-width="1.1" stroke-linejoin="round"/></svg>
<svg class="r" style="left:1029px;top:197px;" width="141" height="9" viewBox="0 0 141 9"><path d="M0 7.4 H13.5 L19.3 1.3 L25 7.4 H140.5" fill="none" stroke="#c8c6c4" stroke-width="1"/></svg>
<div class="r" style="left:1029px;top:386.2px;width:140px;height:1px;background:#dcdad8;"></div>
<span class="t" style="left:1038.90px;top:394.10px;font-size:11px;line-height:13.20px;color:#201f1e;transform:scaleX(0.8648);-webkit-text-stroke:0.3px #201f1e;">Werte</span>
<div class="r" style="left:1032.7px;top:411.8px;width:132px;height:20.9px;background:#fff;border:1px dashed #c8c6c4;border-radius:2px;"></div>
<span class="t" style="left:1041.10px;top:415.70px;font-size:11px;line-height:13.20px;color:#201f1e;transform:scaleX(0.8728);-webkit-text-stroke:0.3px #201f1e;">Datenfelder hier here</span>
<span class="t" style="left:1038.90px;top:440.60px;font-size:11px;line-height:13.20px;color:#201f1e;transform:scaleX(0.9689);-webkit-text-stroke:0.3px #201f1e;">Drilithrough</span>
<span class="t" style="left:1038.90px;top:460.60px;font-size:11px;line-height:13.20px;color:#201f1e;transform:scaleX(0.8709);-webkit-text-stroke:0.3px #201f1e;">Berichtsübergreifend</span>
<div class="r" style="left:1135.7px;top:461.2px;width:25.6px;height:11.8px;background:#fff;border:1px solid #7a7876;border-radius:6px;"></div>
<div class="r" style="left:1139.2px;top:464px;width:6.4px;height:6.4px;background:#605e5c;border-radius:50%;"></div>
<span class="t" style="left:1147.60px;top:464.30px;font-size:6px;line-height:7.20px;color:#8a8886;font-weight:bold;transform:scaleX(1.0388);">Off</span>
<span class="t" style="left:1038.90px;top:481.40px;font-size:11px;line-height:13.20px;color:#201f1e;transform:scaleX(0.8735);-webkit-text-stroke:0.3px #201f1e;">Alle Filter beibehalten</span>
<div class="r" style="left:1135.7px;top:481.7px;width:25.6px;height:12.3px;background:#12745a;border-radius:6.2px;"></div>
<div class="r" style="left:1151.9px;top:484.7px;width:6.4px;height:6.4px;background:#fff;border-radius:50%;"></div>
<span class="t" style="left:1140.40px;top:485.10px;font-size:6px;line-height:7.20px;color:#fff;font-weight:bold;transform:scaleX(0.9602);">On</span>
<div class="r" style="left:1032.7px;top:501.3px;width:132px;height:21.1px;background:#fff;border:1px dashed #c8c6c4;border-radius:2px;"></div>
<span class="t" style="left:1041.10px;top:506.30px;font-size:11px;line-height:13.20px;color:#201f1e;transform:scaleX(0.8935);-webkit-text-stroke:0.3px #201f1e;">Drillthroughfelder hier hin...</span>
<span class="t" style="left:1176.80px;top:132.90px;font-size:14px;line-height:16.80px;color:#1b1a19;transform:scaleX(0.8914);-webkit-text-stroke:0.6px #1b1a19;">Daten</span>
<svg class="r" style="left:1294.4px;top:135.8px;" width="10" height="10" viewBox="0 0 10 10"><path d="M0.6 0.6 L4.8 5 L0.6 9.4 M5 0.6 L9.2 5 L5 9.4" fill="none" stroke="#3b3a39" stroke-width="1.05"/></svg>
<div class="r" style="left:1175.2px;top:159.9px;width:131.5px;height:18.6px;background:#fff;border:1px solid #8a8886;border-radius:2px;"></div>
<svg class="r" style="left:1181.5px;top:165.3px;" width="12" height="10" viewBox="0 0 12 10"><circle cx="5.6" cy="3.6" r="3" fill="none" stroke="#3b3a39" stroke-width="1.05"/><path d="M0.6 9.4 C1.6 5.8 9.6 5.8 10.6 9.4" fill="none" stroke="#3b3a39" stroke-width="1.05"/></svg>
<span class="t" style="left:1200.30px;top:162.50px;font-size:12.5px;line-height:15.00px;color:#605e5c;transform:scaleX(0.8185);">Suchen</span>
<svg class="r" style="left:1182.1px;top:190.5px;" width="6" height="10" viewBox="0 0 6 10"><path d="M0.6 0.6 L5 5 L0.6 9.4" fill="none" stroke="#3b3a39" stroke-width="1.05"/></svg>
<svg class="r" style="left:1193px;top:190.5px;" width="10" height="10" viewBox="0 0 10 10"><rect x="0.5" y="0.5" width="9" height="9" fill="none" stroke="#484644" stroke-width="1"/><path d="M0.5 2.6 H9.5 M0.5 4.9 H9.5 M0.5 7.2 H9.5 M3.5 2.6 V9.5 M6.5 2.6 V9.5" stroke="#484644" stroke-width="0.8"/><rect x="0.5" y="0.5" width="9" height="1.7" fill="#8a8886"/></svg>
<span class="t" style="left:1206.60px;top:188.90px;font-size:11px;line-height:13.20px;color:#201f1e;transform:scaleX(0.8841);-webkit-text-stroke:0.3px #201f1e;">DimKonto</span>
<svg class="r" style="left:1182.1px;top:209.1px;" width="6" height="10" viewBox="0 0 6 10"><path d="M0.6 0.6 L5 5 L0.6 9.4" fill="none" stroke="#3b3a39" stroke-width="1.05"/></svg>
<svg class="r" style="left:1193px;top:209.1px;" width="10" height="10" viewBox="0 0 10 10"><rect x="0.5" y="0.5" width="9" height="9" fill="none" stroke="#484644" stroke-width="1"/><path d="M0.5 2.6 H9.5 M0.5 4.9 H9.5 M0.5 7.2 H9.5 M3.5 2.6 V9.5 M6.5 2.6 V9.5" stroke="#484644" stroke-width="0.8"/><rect x="0.5" y="0.5" width="9" height="1.7" fill="#8a8886"/></svg>
<span class="t" style="left:1206.60px;top:207.50px;font-size:11px;line-height:13.20px;color:#201f1e;transform:scaleX(0.8778);-webkit-text-stroke:0.3px #201f1e;">DimDatum</span>
<svg class="r" style="left:1182.1px;top:227.8px;" width="6" height="10" viewBox="0 0 6 10"><path d="M0.6 0.6 L5 5 L0.6 9.4" fill="none" stroke="#3b3a39" stroke-width="1.05"/></svg>
<svg class="r" style="left:1193px;top:227.8px;" width="10" height="10" viewBox="0 0 10 10"><rect x="0.5" y="0.5" width="9" height="9" fill="none" stroke="#484644" stroke-width="1"/><path d="M0.5 2.6 H9.5 M0.5 4.9 H9.5 M0.5 7.2 H9.5 M3.5 2.6 V9.5 M6.5 2.6 V9.5" stroke="#484644" stroke-width="0.8"/><rect x="0.5" y="0.5" width="9" height="1.7" fill="#8a8886"/></svg>
<span class="t" style="left:1206.60px;top:226.20px;font-size:11px;line-height:13.20px;color:#201f1e;transform:scaleX(0.8830);-webkit-text-stroke:0.3px #201f1e;">DimProduktkategorie</span>
<svg class="r" style="left:1182.1px;top:246.4px;" width="6" height="10" viewBox="0 0 6 10"><path d="M0.6 0.6 L5 5 L0.6 9.4" fill="none" stroke="#3b3a39" stroke-width="1.05"/></svg>
<svg class="r" style="left:1193px;top:246.4px;" width="10" height="10" viewBox="0 0 10 10"><rect x="0.5" y="0.5" width="9" height="9" fill="none" stroke="#484644" stroke-width="1"/><path d="M0.5 2.6 H9.5 M0.5 4.9 H9.5 M0.5 7.2 H9.5 M3.5 2.6 V9.5 M6.5 2.6 V9.5" stroke="#484644" stroke-width="0.8"/><rect x="0.5" y="0.5" width="9" height="1.7" fill="#8a8886"/></svg>
<span class="t" style="left:1206.60px;top:244.80px;font-size:11px;line-height:13.20px;color:#201f1e;transform:scaleX(0.8497);-webkit-text-stroke:0.3px #201f1e;">DimSzenario</span>
<svg class="r" style="left:1182.1px;top:265px;" width="6" height="10" viewBox="0 0 6 10"><path d="M0.6 0.6 L5 5 L0.6 9.4" fill="none" stroke="#3b3a39" stroke-width="1.05"/></svg>
<svg class="r" style="left:1193px;top:265px;" width="10" height="10" viewBox="0 0 10 10"><rect x="0.5" y="0.5" width="9" height="9" fill="none" stroke="#484644" stroke-width="1"/><path d="M0.5 2.6 H9.5 M0.5 4.9 H9.5 M0.5 7.2 H9.5 M3.5 2.6 V9.5 M6.5 2.6 V9.5" stroke="#484644" stroke-width="0.8"/><rect x="0.5" y="0.5" width="9" height="1.7" fill="#8a8886"/></svg>
<span class="t" style="left:1206.60px;top:263.40px;font-size:11px;line-height:13.20px;color:#201f1e;transform:scaleX(0.8360);-webkit-text-stroke:0.3px #201f1e;">FaktStrategiePlan</span>
<svg class="r" style="left:1037.5px;top:213px;" width="14.4" height="14.4" viewBox="0 0 14.4 14.4"><path d="M0.6 0 V13.6 H14.4" fill="none" stroke="#4a4846" stroke-width="1.2"/><rect x="1.4" y="0.8" width="8" height="5" fill="#3f97dc"/><rect x="1.4" y="7.4" width="11.6" height="4.6" fill="#e6e4e2" stroke="#4a4846" stroke-width="0.9"/><path d="M5 7.4 V12" stroke="#4a4846" stroke-width="0.8"/></svg>
<svg class="r" style="left:1059.4px;top:213px;" width="14.4" height="14.4" viewBox="0 0 14.4 14.4"><path d="M0.6 0 V13.6 H14.4" fill="none" stroke="#4a4846" stroke-width="1.2"/><rect x="2.4" y="3" width="3.4" height="10.4" fill="#3f97dc"/><rect x="5.8" y="5.4" width="2.6" height="8" fill="#f3f2f1" stroke="#4a4846" stroke-width="0.9"/><rect x="9" y="2.6" width="3.6" height="10.8" fill="#f3f2f1" stroke="#4a4846" stroke-width="0.9"/><rect x="9.8" y="5" width="2" height="8.4" fill="#3f97dc"/></svg>
<svg class="r" style="left:1081.3px;top:213px;" width="14.4" height="14.4" viewBox="0 0 14.4 14.4"><rect x="0" y="0.6" width="14.2" height="3.2" fill="#3f97dc"/><path d="M0.6 0 V13.6 H14.4" fill="none" stroke="#4a4846" stroke-width="1.2"/><rect x="1.2" y="5.2" width="7" height="2.6" fill="#e6e4e2" stroke="#4a4846" stroke-width="0.9"/><rect x="1.2" y="9" width="10" height="3.6" fill="#e6e4e2" stroke="#4a4846" stroke-width="0.9"/></svg>
<svg class="r" style="left:1103.1px;top:213px;" width="14.4" height="14.4" viewBox="0 0 14.4 14.4"><rect x="0.4" y="0" width="4.4" height="13.6" fill="#3f97dc"/><path d="M0 13.7 H14.4" stroke="#4a4846" stroke-width="1.2"/><rect x="5.2" y="5" width="2.6" height="8.4" fill="#e6e4e2" stroke="#4a4846" stroke-width="0.9"/><rect x="8" y="7.5" width="2.6" height="6" fill="#e6e4e2" stroke="#4a4846" stroke-width="0.9"/><rect x="10.8" y="3.4" width="2.8" height="10" fill="#e6e4e2" stroke="#4a4846" stroke-width="0.9"/></svg>
<svg class="r" style="left:1125.2px;top:213px;" width="14.4" height="14.4" viewBox="0 0 14.4 14.4"><path d="M0.6 0 V13.6 H14.4" fill="none" stroke="#4a4846" stroke-width="1.2"/><rect x="1.4" y="1.6" width="11.4" height="4" fill="#3f97dc"/><rect x="1.4" y="7.6" width="11.4" height="4.4" fill="#f3f2f1" stroke="#4a4846" stroke-width="0.9"/><rect x="1.8" y="8" width="5" height="3.6" fill="#dcdad8"/></svg>
<svg class="r" style="left:1147.0px;top:213px;" width="14.4" height="14.4" viewBox="0 0 14.4 14.4"><path d="M0.6 0 V13.6 H14.4" fill="none" stroke="#4a4846" stroke-width="1.2"/><rect x="3" y="1.2" width="3.6" height="12" fill="#3f97dc"/><rect x="8.4" y="1.6" width="4" height="11.6" fill="#f3f2f1" stroke="#4a4846" stroke-width="0.9"/><rect x="9.4" y="3" width="2" height="10.2" fill="#dcdad8"/></svg>
<svg class="r" style="left:1037.5px;top:235px;" width="14.4" height="14.4" viewBox="0 0 14.4 14.4"><path d="M0.6 0 V13.6 H14.4" fill="none" stroke="#4a4846" stroke-width="1.2"/><path d="M1.4 9.6 C3 9 3.4 5 5.2 4.2 C7 3.6 7.4 6 9 4.4 L12.8 2" fill="none" stroke="#3f97dc" stroke-width="1.3"/><path d="M1.6 6.2 C3 7.4 4 7.6 5.4 6.4 C7 5 8 8 9.6 6.4 L13 3.2 M9.4 3 L11 7" fill="none" stroke="#4a4846" stroke-width="1"/></svg>
<svg class="r" style="left:1059.4px;top:235px;" width="14.4" height="14.4" viewBox="0 0 14.4 14.4"><path d="M0.8 9.6 L4.8 4.8 L7 8 L10.6 3.6 L13.8 10 V13.8 H0.8 Z" fill="#3f97dc"/><path d="M0.8 10 L5.6 0.8 L7.8 5 L10.2 1 L13.8 9.6 V13.4 H0.8 Z" fill="none" stroke="#4a4846" stroke-width="1.05"/></svg>
<svg class="r" style="left:1081.3px;top:235px;" width="14.4" height="14.4" viewBox="0 0 14.4 14.4"><path d="M0.8 3.6 L3.2 6.2 L6 3.8 L9.6 1 L12.6 3.8 L13.8 2.6 V9 L10.6 11 L7.4 8.4 L4.6 10.8 L0.8 9 Z" fill="#3f97dc"/><path d="M0.6 0 V13.6 H14.2 V1" fill="none" stroke="#4a4846" stroke-width="1.1"/><path d="M0.8 9 L4.6 10.8 L7.4 8.4 L10.6 11 L13.8 9" fill="none" stroke="#d5e9f7" stroke-width="0.9"/></svg>
<svg class="r" style="left:1103.1px;top:235px;" width="14.4" height="14.4" viewBox="0 0 14.4 14.4"><path d="M0.8 0.8 H13.8 V7.2 C12.4 7.4 11.6 9 10.4 9.6 C9 10 7.4 6.4 5.6 9.4 C4.2 11.4 2.2 10.8 0.8 8 Z" fill="#3f97dc"/><path d="M0.6 0.4 V13.6 H14 V0.4" fill="none" stroke="#4a4846" stroke-width="1.1"/></svg>
<svg class="r" style="left:1125.2px;top:235px;" width="14.4" height="14.4" viewBox="0 0 14.4 14.4"><path d="M0.6 0 V13.6 H14.4" fill="none" stroke="#4a4846" stroke-width="1.2"/><rect x="3.2" y="1" width="3.4" height="12" fill="#3f97dc"/><rect x="9.4" y="3.6" width="2.6" height="9.6" fill="#9a9896"/><path d="M1.2 11 L4.2 6.4 L6.6 9.6 L10.4 2.4 L13 6" fill="none" stroke="#4a4846" stroke-width="1.1"/></svg>
<svg class="r" style="left:1147.0px;top:235px;" width="14.4" height="14.4" viewBox="0 0 14.4 14.4"><path d="M0.6 0 V13.6 H14.4" fill="none" stroke="#4a4846" stroke-width="1.2"/><rect x="3" y="5.4" width="3" height="8" fill="#3f97dc"/><rect x="6" y="1.4" width="2.6" height="12" fill="#f3f2f1" stroke="#4a4846" stroke-width="0.9"/><rect x="9.2" y="5" width="2.4" height="8.4" fill="#d9b98c"/><rect x="11.6" y="3.4" width="2" height="10" fill="#b9b7b5"/><path d="M1.4 10.4 L4.6 6.6 L8 8.6 L12.8 3.8" fill="none" stroke="#4a4846" stroke-width="1"/></svg>
<svg class="r" style="left:1037.5px;top:256.2px;" width="14.4" height="14.4" viewBox="0 0 14.4 14.4"><path d="M0.6 0 V13.6 H14.4" fill="none" stroke="#4a4846" stroke-width="1.2"/><path d="M2 3.4 L5 5.2 L8 3 L11 4.6 L13.4 2.4 V13 H2 Z" fill="#57a872"/><path d="M2 6.6 L5 8 L8 5.6 L11 8.2 L13.4 5 V13 H2 Z" fill="#d0605a"/><path d="M2 9.6 L5 10.4 L8 8.2 L11 10.6 L13.4 8 V13 H2 Z" fill="#3f97dc"/></svg>
<svg class="r" style="left:1059.4px;top:256.2px;" width="14.4" height="14.4" viewBox="0 0 14.4 14.4"><path d="M0.6 0 V13.6 H14.4" fill="none" stroke="#4a4846" stroke-width="1.2"/><rect x="2.2" y="1.4" width="1.6" height="12" fill="#4a4846"/><rect x="4.8" y="3.4" width="1.6" height="10" fill="#4a4846"/><rect x="7.2" y="4.4" width="2" height="9" fill="#3f97dc"/><rect x="10" y="1.6" width="1.6" height="6.4" fill="#3f97dc"/><rect x="12.2" y="0.8" width="1.6" height="12.6" fill="#4a4846"/><path d="M0.6 0.6 H14" stroke="#4a4846" stroke-width="0.8"/></svg>
<svg class="r" style="left:1081.3px;top:256.2px;" width="14.4" height="14.4" viewBox="0 0 14.4 14.4"><rect x="0" y="0.6" width="14.4" height="2.6" fill="#3f97dc"/><rect x="1.2" y="4" width="12" height="2.6" fill="#3f97dc"/><rect x="2.8" y="7.4" width="8.8" height="2.6" fill="#3f97dc"/><rect x="4.8" y="10.8" width="4.8" height="2.6" fill="#3f97dc"/></svg>
<svg class="r" style="left:1103.1px;top:256.2px;" width="14.4" height="14.4" viewBox="0 0 14.4 14.4"><path d="M0.6 0 V13.6 H14.4" fill="none" stroke="#4a4846" stroke-width="1.2"/><path d="M3.6 10.4 L7.2 6.2 L12 2.4 M7.2 6.2 L12.4 10.6" fill="none" stroke="#3f97dc" stroke-width="1"/><circle cx="3.6" cy="10.6" r="1.4" fill="none" stroke="#3f97dc" stroke-width="1"/><circle cx="12" cy="2.2" r="1.3" fill="none" stroke="#3f97dc" stroke-width="1"/><circle cx="3.4" cy="4" r="0.9" fill="#4a4846"/><circle cx="7.2" cy="6.2" r="0.9" fill="#4a4846"/></svg>
<svg class="r" style="left:1125.2px;top:256.2px;" width="14.4" height="14.4" viewBox="0 0 14.4 14.4"><circle cx="7.2" cy="7.2" r="6.6" fill="#f7f6f5" stroke="#4a4846" stroke-width="1.1"/><path d="M7.2 0.8 A6.4 6.4 0 0 1 13.6 7.8 L7.2 7.4 Z" fill="#3f97dc" stroke="#2b7fc4" stroke-width="0.8"/></svg>
<svg class="r" style="left:1147.0px;top:256.2px;" width="14.4" height="14.4" viewBox="0 0 14.4 14.4"><circle cx="7.2" cy="7.2" r="4.9" fill="none" stroke="#3f97dc" stroke-width="3.8"/><circle cx="7.2" cy="7.2" r="6.8" fill="none" stroke="#2b7fc4" stroke-width="0.7"/><circle cx="7.2" cy="7.2" r="2.9" fill="none" stroke="#2b7fc4" stroke-width="0.7"/></svg>
<svg class="r" style="left:1037.5px;top:277.7px;" width="14.4" height="14.4" viewBox="0 0 14.4 14.4"><rect x="0.4" y="0.4" width="6.4" height="13.8" fill="#3f97dc"/><rect x="7.2" y="0.6" width="6.8" height="13.4" fill="#f7f6f5" stroke="#4a4846" stroke-width="0.9"/><path d="M7.2 6 H14 M10.4 6 V14 M10.4 10 H14 M0.4 5 H6.8 M0.4 9.6 H6.8" stroke="#4a4846" stroke-width="0.8"/></svg>
<svg class="r" style="left:1059.4px;top:277.7px;" width="14.4" height="14.4" viewBox="0 0 14.4 14.4"><circle cx="7.2" cy="6.6" r="5.6" fill="#e9efe9" stroke="#4a4846" stroke-width="1.2"/><path d="M4 5 C5 2 9 2 10.6 4 C11 7 8 7.6 7.4 10.6 C5 10.4 3.4 8 4 5Z" fill="#4aa45c"/><path d="M2.6 14 H12" stroke="#4a4846" stroke-width="1"/></svg>
<svg class="r" style="left:1081.3px;top:277.7px;" width="14.4" height="14.4" viewBox="0 0 14.4 14.4"><path d="M0.6 1.6 C3 2.6 5 2.6 7.2 1.4 C9.4 2.6 11.4 2.6 13.8 1.6 V8 C13.8 11 10 13 7.2 14 C4.4 13 0.6 11 0.6 8 Z" fill="#3f97dc" stroke="#5a5856" stroke-width="0.9"/><path d="M0.8 5.6 H6.6 V1.8 M7 13.6 V7.8 H13.6 M3.4 9 L6.8 11" stroke="#e4f0fa" stroke-width="0.9" fill="none"/><rect x="7.4" y="2.6" width="5.6" height="4.6" fill="#dcebf7"/></svg>
<svg class="r" style="left:1103.1px;top:277.7px;" width="14.4" height="14.4" viewBox="0 0 14.4 14.4"><path d="M0.6 1.6 C3 2.6 5 2.6 7.2 1.4 C9.4 2.6 11.4 2.6 13.8 1.6 V8 C13.8 11 10 13 7.2 14 C4.4 13 0.6 11 0.6 8 Z" fill="#e4f0fa" stroke="#2b7fc4" stroke-width="1.1"/><path d="M2 5.4 L5.4 6.4 L7.2 4.2 L9 6.4 L12.6 5.2 M4 10.4 L7.2 8.2 L10.4 10.6 M7.2 8.2 V4.2" fill="none" stroke="#3f97dc" stroke-width="1"/></svg>
<svg class="r" style="left:1125.2px;top:277.7px;" width="14.4" height="14.4" viewBox="0 0 14.4 14.4"><path d="M9.6 0 L13 14.2 L8.6 10.6 L1.8 13 Z" fill="#2f8fd6"/></svg>
<svg class="r" style="left:1147.0px;top:277.7px;" width="14.4" height="14.4" viewBox="0 0 14.4 14.4"><path d="M0.8 10.6 C0.8 2.6 13.6 2.6 13.6 10.6 H10.6 C10.6 6.6 3.8 6.6 3.8 10.6 Z" fill="#d9eaf8" stroke="#4a4846" stroke-width="1"/><path d="M3.4 5.8 C5 4.4 8 4 9 5 L7.6 8.4 L5.6 8 Z" fill="#3f97dc"/><path d="M7.2 4.4 V8.8 M4 6 L6 8.8" stroke="#4a4846" stroke-width="0.8"/></svg>
<svg class="r" style="left:1037.5px;top:300.1px;" width="14.4" height="14.4" viewBox="0 0 14.4 14.4"><rect x="0.6" y="2.2" width="13.6" height="10" fill="#f7f6f5" stroke="#4a4846" stroke-width="1.2"/><rect x="2.8" y="4.4" width="9.2" height="5.6" fill="#e4f0fa" stroke="#3f97dc" stroke-width="0.9"/><path d="M2.8 7.2 H12 M6 4.4 V10 M9 4.4 V10" stroke="#3f97dc" stroke-width="0.8"/></svg>
<svg class="r" style="left:1059.4px;top:300.1px;" width="14.4" height="14.4" viewBox="0 0 14.4 14.4"><rect x="0.7" y="0.7" width="13" height="13.2" fill="#f7f6f5" stroke="#4a4846" stroke-width="1.2"/><rect x="2.6" y="3" width="9.2" height="2.6" fill="#3f97dc"/><rect x="2.6" y="7.4" width="9.2" height="2.8" fill="#3f97dc"/><path d="M2.6 1.8 H11.8 M2.6 6.4 H11.8 M2.6 11.6 H11.8" stroke="#9a9896" stroke-width="0.6"/></svg>
<svg class="r" style="left:1081.3px;top:300.1px;" width="14.4" height="14.4" viewBox="0 0 14.4 14.4"><rect x="0.6" y="1.2" width="13.4" height="11.6" fill="#f0efee" stroke="#4a4846" stroke-width="1.2"/><rect x="2.8" y="4.2" width="4" height="4.6" fill="#bfe3c4" stroke="#3fa34f" stroke-width="1"/><rect x="8.6" y="3.2" width="3.6" height="3" fill="#e0504a"/><path d="M8 8.6 H12.4" stroke="#c8c6c4" stroke-width="1"/></svg>
<svg class="r" style="left:1103.1px;top:300.1px;" width="14.4" height="14.4" viewBox="0 0 14.4 14.4"><rect x="0.6" y="0.6" width="13.4" height="13" fill="#f7f6f5" stroke="#4a4846" stroke-width="1.1"/><path d="M0.6 3.2 H14 M4 3.2 V13.6 M4 8.6 H8" stroke="#4a4846" stroke-width="0.9"/><path d="M7.6 8 H14.6 L12.2 11 V14.6 L10 13.4 V11 Z" fill="#fff" stroke="#4a4846" stroke-width="0.9"/></svg>
<svg class="r" style="left:1125.2px;top:300.1px;" width="14.4" height="14.4" viewBox="0 0 14.4 14.4"><rect x="0.8" y="0.7" width="12.6" height="13.2" fill="#f7f6f5" stroke="#4a4846" stroke-width="1.2"/><path d="M0.8 3.2 H13.4 M0.8 6.8 H13.4 M0.8 10.4 H13.4 M5 3.2 V13.8 M9.2 3.2 V13.8" stroke="#4a4846" stroke-width="1"/></svg>
<svg class="r" style="left:1147.0px;top:300.1px;" width="14.4" height="14.4" viewBox="0 0 14.4 14.4"><rect x="0.6" y="0.7" width="13.4" height="13.2" fill="#3f97dc" stroke="#5a5856" stroke-width="1"/><rect x="3.8" y="3.4" width="6.2" height="3.6" fill="#f7f6f5"/><path d="M0.6 3.2 H14 M0.6 7 H14 M0.6 10.6 H14 M3.6 0.8 V13.8 M7 3.2 V13.8 M10.2 0.8 V13.8" stroke="#cfe4f5" stroke-width="0.7"/><path d="M0.6 1.9 H14" stroke="#5a5856" stroke-width="1.2" stroke-dasharray="2 1.2"/></svg>
<svg class="r" style="left:1037.5px;top:322.1px;" width="14.4" height="14.4" viewBox="0 0 14.4 14.4"><text x="2.8" y="12.2" font-family="Liberation Sans, sans-serif" font-weight="bold" font-size="11.5" fill="#2f86cf" textLength="7.6" lengthAdjust="spacingAndGlyphs">R</text></svg>
<svg class="r" style="left:1059.4px;top:322.1px;" width="14.4" height="14.4" viewBox="0 0 14.4 14.4"><text x="0.4" y="10.8" font-family="Liberation Sans, sans-serif" font-size="12.5" fill="#3f8fd4" textLength="14" lengthAdjust="spacingAndGlyphs">Py</text></svg>
<svg class="r" style="left:1081.3px;top:322.1px;" width="14.4" height="14.4" viewBox="0 0 14.4 14.4"><path d="M0.8 0 V13.6 H14.2" fill="none" stroke="#4a4846" stroke-width="1.2"/><path d="M1 2.4 H9 M1 4.6 C5 4.6 6 4 9.4 3 M1 6.8 C5 6.6 7 5 9.6 3.4 M3.6 9.8 C6 9 8 6 9.8 3.8 M4 11.8 H8" fill="none" stroke="#605e5c" stroke-width="0.8"/><circle cx="11.4" cy="2.8" r="1.9" fill="#3f97dc"/></svg>
<svg class="r" style="left:1103.1px;top:322.1px;" width="14.4" height="14.4" viewBox="0 0 14.4 14.4"><rect x="7.8" y="0" width="6.4" height="3.2" fill="#3f97dc"/><rect x="7.8" y="3.8" width="6.4" height="3.2" fill="#3f97dc"/><rect x="7.8" y="7.6" width="6.4" height="3.2" fill="#3f97dc"/><rect x="7.8" y="11.4" width="6.4" height="3" fill="#3f97dc"/><circle cx="1.6" cy="7.2" r="1.5" fill="#3f97dc"/><circle cx="4.6" cy="7.2" r="1.3" fill="#3f97dc"/><path d="M5.6 7.2 H8 M8 1.6 C6.4 1.6 6.8 7.2 5.6 7.2 C6.8 7.2 6.4 12.8 8 12.8" fill="none" stroke="#2b7fc4" stroke-width="0.9"/><path d="M8.6 1.6 H13.6 M8.6 5.4 H13.6 M8.6 9.2 H13.6 M8.6 12.9 H13.6" stroke="#d5e9f7" stroke-width="0.7"/></svg>
<svg class="r" style="left:1125.2px;top:322.1px;" width="14.4" height="14.4" viewBox="0 0 14.4 14.4"><path d="M0.7 0.9 H13.7 V10.4 H5.4 L3 13 V10.4 H0.7 Z" fill="#f7f9fc" stroke="#2b7fc4" stroke-width="1.2" stroke-linejoin="round"/></svg>
<svg class="r" style="left:1147.0px;top:322.1px;" width="14.4" height="14.4" viewBox="0 0 14.4 14.4"><path d="M2 0.7 H9.4 L13.2 4.6 V13.8 H2 Z" fill="#f7f6f5" stroke="#4a4846" stroke-width="1.1"/><path d="M9.4 0.7 V4.6 H13.2" fill="none" stroke="#4a4846" stroke-width="0.9"/><path d="M1.2 3.6 V7.4 H8.2" fill="none" stroke="#2b7fc4" stroke-width="1.2"/><path d="M4.8 2.2 H8.4" stroke="#e8b774" stroke-width="1.4"/></svg>
<svg class="r" style="left:1037.5px;top:343.3px;" width="14.4" height="14.4" viewBox="0 0 14.4 14.4"><path d="M3.4 0.8 H11 C11 5 10 8.6 7.2 9.2 C4.4 8.6 3.4 5 3.4 0.8 Z" fill="#f7f6f5" stroke="#4a4846" stroke-width="1.1"/><path d="M3.4 1.8 C0 1.4 0.4 6.4 4.4 6.6 M11 1.8 C14.4 1.4 14 6.4 10 6.6" fill="none" stroke="#4a4846" stroke-width="1"/><path d="M3.4 0.8 H11" stroke="#3f97dc" stroke-width="1.6"/><path d="M7.2 9.2 V11.6" stroke="#3f97dc" stroke-width="2.2"/><rect x="3.8" y="11.6" width="6.8" height="2.2" fill="#3f97dc"/></svg>
<svg class="r" style="left:1059.4px;top:343.3px;" width="14.4" height="14.4" viewBox="0 0 14.4 14.4"><path d="M1.4 0.7 H8.8 L12.8 4.6 V13.8 H1.4 Z" fill="#e9e8e7" stroke="#4a4846" stroke-width="1.1"/><path d="M8.8 0.7 V4.6 H12.8" fill="none" stroke="#4a4846" stroke-width="0.9"/><rect x="3" y="8.6" width="8" height="4.2" fill="#9a9896" stroke="#4a4846" stroke-width="0.7"/><path d="M5.6 8.6 V12.8 M8.4 8.6 V12.8 M3 10.6 H11" stroke="#4a4846" stroke-width="0.6"/></svg>
<svg class="r" style="left:1081.3px;top:343.3px;" width="14.4" height="14.4" viewBox="0 0 14.4 14.4"><rect x="1.4" y="2.6" width="12.6" height="10.2" fill="#f7f6f5" stroke="#4a4846" stroke-width="1.1"/><path d="M3 6 H12.4 M3 8.4 H12.4 M3 10.6 H12.4" stroke="#8dbfe6" stroke-width="1" stroke-dasharray="2.4 1"/><rect x="-0.4" y="-0.6" width="4.8" height="6.6" rx="1.6" fill="#f0a030"/><circle cx="2" cy="2.4" r="1" fill="#fde7c4"/></svg>
<svg class="r" style="left:1103.1px;top:343.3px;" width="14.4" height="14.4" viewBox="0 0 14.4 14.4"><rect x="1.2" y="1.2" width="12.8" height="12" fill="#f7f6f5" stroke="#4a4846" stroke-width="1.1"/><path d="M1.2 3.8 H14 M4.6 3.8 V13 M4.6 8 H8" stroke="#4a4846" stroke-width="0.9"/><path d="M7.8 8 H14.4 L12.2 10.8 V14.4 L10 13.2 V10.8 Z" fill="#fff" stroke="#4a4846" stroke-width="0.9"/><rect x="-0.4" y="-0.6" width="4.8" height="6.8" rx="1.6" fill="#f0a030"/><circle cx="2" cy="2.6" r="1" fill="#fde7c4"/></svg>
<svg class="r" style="left:1125.2px;top:343.3px;" width="14.4" height="14.4" viewBox="0 0 14.4 14.4"><rect x="1" y="1" width="12.8" height="12.8" fill="#e4f0fa" stroke="#2b7fc4" stroke-width="1.2"/><path d="M4.6 13.6 C5 9 8 7.6 9.4 6 C10.6 4.6 10.6 3 10.4 1.2 H13.6 V8 L8 13.6 Z" fill="#3f97dc"/><path d="M9 4 L11.8 9.4" stroke="#d5e9f7" stroke-width="0.8" stroke-dasharray="1.2 1"/><rect x="-0.4" y="-0.4" width="4.8" height="7" rx="1.6" fill="#f0a030"/><circle cx="2" cy="3" r="1" fill="#fde7c4"/><path d="M14.4 10 V14.4 H10.4 Z" fill="#f0a030"/></svg>
<svg class="r" style="left:1147.0px;top:343.3px;" width="14.4" height="14.4" viewBox="0 0 14.4 14.4"><path d="M7.2 0.8 L13.8 7.2 L7.2 13.6 L0.6 7.2 Z" fill="#f6eefb" stroke="#b35fd0" stroke-width="1.4" stroke-linejoin="round"/><path d="M4.2 5.6 H6.6 V8 M10.2 8.8 H7.8 V6.4 M5.2 9.6 H7 M8.4 4.6 H9.6" fill="none" stroke="#b35fd0" stroke-width="1"/></svg>
<svg class="r" style="left:1037.5px;top:365.7px;" width="14.4" height="14.4" viewBox="0 0 14.4 14.4"><path d="M0.8 1 H6.6 L13.6 7.4 L6.8 13.6 H1 L7.6 7.4 Z" fill="#e4f0fa" stroke="#2b88d8" stroke-width="1.2" stroke-linejoin="round"/><path d="M3.4 4 L7.4 7.4 L3.4 11" fill="none" stroke="#2b88d8" stroke-width="1"/></svg>
<svg class="r" style="left:1059.4px;top:365.7px;" width="14.4" height="14.4" viewBox="0 0 14.4 14.4"><circle cx="3.2" cy="6.2" r="0.9" fill="#2b2a29"/><circle cx="8.2" cy="6.2" r="0.9" fill="#2b2a29"/><circle cx="13.2" cy="6.2" r="0.9" fill="#2b2a29"/></svg>
<svg class="r" style="left:44.2px;top:776.7px;" width="16" height="13" viewBox="0 0 16 13"><rect x="0.6" y="0.6" width="14.6" height="9" fill="none" stroke="#3b3a39" stroke-width="1.1"/><path d="M7.9 9.6 V11.6 M5.4 11.8 H10.4" stroke="#3b3a39" stroke-width="1.1"/></svg>
<div class="r" style="left:42.5px;top:792.7px;width:18.5px;height:2px;background:#117865;"></div>
<svg class="r" style="left:82px;top:775px;" width="10" height="16" viewBox="0 0 10 16"><rect x="0.6" y="0.6" width="8.4" height="14.6" rx="1.2" fill="none" stroke="#3b3a39" stroke-width="1.1"/><circle cx="4.8" cy="12.6" r="0.7" fill="#3b3a39"/></svg>
<svg class="r" style="left:107.5px;top:781.5px;" width="5" height="7" viewBox="0 0 5 7"><path d="M4 0.4 L0.8 3.4 L4 6.4 Z" fill="#c8c6c4"/></svg>
<svg class="r" style="left:124px;top:781.5px;" width="5" height="7" viewBox="0 0 5 7"><path d="M1 0.4 L4.2 3.4 L1 6.4 Z" fill="#c8c6c4"/></svg>
<div class="r" style="left:134px;top:771.2px;width:60.5px;height:26.8px;background:#fff;"></div>
<div class="r" style="left:134px;top:796px;width:60.5px;height:2px;background:#117865;"></div>
<span class="t" style="left:150.00px;top:780.00px;font-size:11px;line-height:13.20px;color:#1b1a19;transform:scaleX(0.8031);-webkit-text-stroke:0.3px #1b1a19;">Page 1</span>
<div class="r" style="left:194.5px;top:771.2px;width:30px;height:26.6px;background:#217a63;"></div>
<svg class="r" style="left:203.5px;top:779px;" width="11" height="11" viewBox="0 0 11 11"><path d="M5.5 0.5 V10.5 M0.5 5.5 H10.5" stroke="#fff" stroke-width="1.7"/></svg>
<span class="t" style="left:5.00px;top:803.00px;font-size:11px;line-height:13.20px;color:#252423;transform:scaleX(0.8565);">Seite 1 von 1</span>
<div class="r" style="left:1144.5px;top:808px;width:3.5px;height:1px;background:#3b3a39;"></div>
<div class="r" style="left:1152px;top:807.6px;width:78px;height:1px;background:#3b3a39;"></div>
<div class="r" style="left:1183.5px;top:803.5px;width:3px;height:9px;background:#3b3a39;border-radius:1px;"></div>
<div class="r" style="left:1191px;top:805.5px;width:1px;height:5px;background:#3b3a39;"></div>
<svg class="r" style="left:1234.5px;top:804.5px;" width="7" height="7" viewBox="0 0 7 7"><path d="M3.5 0.3 V6.7 M0.3 3.5 H6.7" stroke="#3b3a39" stroke-width="1"/></svg>
<span class="t" style="left:1250.50px;top:801.70px;font-size:10.5px;line-height:12.60px;color:#605e5c;transform:scaleX(0.9041);">84%</span>
<svg class="r" style="left:1283.5px;top:803.5px;" width="14" height="10" viewBox="0 0 14 10"><rect x="0.6" y="0.6" width="12.4" height="8.4" fill="none" stroke="#3b3a39" stroke-width="1.1"/><path d="M3 0.6 V9 M10.4 0.6 V9" stroke="#3b3a39" stroke-width="1"/></svg>
<div class="r" style="left:91.6px;top:112px;width:150.3px;height:80.5px;background:#fff;"></div>
<div class="r" style="left:91.6px;top:192px;width:140px;height:43.5px;background:#fff;"></div>
<div class="r" style="left:91.6px;top:235.1px;width:184.6px;height:48.6px;background:#fff;"></div>
<div class="r" style="left:232.2px;top:150.3px;width:3.2px;height:1.5px;background:#3a92e8;"></div>
<div class="r" style="left:236.4px;top:150.3px;width:3.4px;height:1.5px;background:#3a92e8;"></div>
<svg class="r" style="left:13.2px;top:135.2px;" width="12" height="11" viewBox="0 0 12 11"><path d="M0.6 0 V10.2 H11.4" fill="none" stroke="#3b3a39" stroke-width="1.2"/><path d="M2.9 10 V4 H5.3 V10 M6.3 10 V5.4 H8 V10 M9 10 V1.6 H11 V10" fill="none" stroke="#3b3a39" stroke-width="1.1"/><path d="M4.1 6 V10 M10 3.4 V10" stroke="#3b3a39" stroke-width="0.9"/></svg>
<svg class="r" style="left:13px;top:165.5px;" width="13" height="12" viewBox="0 0 13 12"><rect x="0.6" y="0.6" width="11.8" height="10.8" fill="none" stroke="#858381" stroke-width="1"/><path d="M0.6 3.3 H12.4 M0.6 6 H12.4 M0.6 8.7 H12.4 M4.6 0.6 V11.4 M8.5 0.6 V11.4" stroke="#858381" stroke-width="0.9"/></svg>
<svg class="r" style="left:12px;top:196.6px;" width="15" height="13.4" viewBox="0 0 15 13.4"><rect x="5.2" y="0.6" width="9.4" height="12.2" fill="none" stroke="#858381" stroke-width="1"/><path d="M5.2 3.6 H14.6 M5.2 6.6 H14.6 M5.2 9.6 H14.6 M8.4 0.6 V12.8 M11.5 0.6 V12.8" stroke="#858381" stroke-width="0.85"/><path d="M5.2 3 H2.4 C0.9 3 0.5 4 0.5 5 V8.2 C0.5 9.4 1.2 10 2.4 10 H5.2" fill="none" stroke="#858381" stroke-width="1"/><path d="M0.5 5.4 H5.2 M0.5 7.8 H5.2 M2.8 3 V10" stroke="#858381" stroke-width="0.8"/></svg>
<svg class="r" style="left:11.2px;top:228.2px;" width="14" height="13" viewBox="0 0 14 13"><path d="M4.6 9 V0.6 H9 L12.6 4 V8.4 M9 0.6 V4 H12.6" fill="none" stroke="#858381" stroke-width="1"/><path d="M0.6 9.4 V12.2 H4.6 M2.6 9.4 V12.2 M6.2 12.2 H8 M9.4 12.2 H11.2 M12.6 10 V12.2" fill="none" stroke="#858381" stroke-width="1"/></svg>
<div class="r" style="left:1.7px;top:127.6px;width:36.2px;height:27.4px;border:2.9px solid #e4423e;box-shadow:0 0 2.2px 0.3px rgba(228,66,62,.75), inset 0 0 2.2px 0.3px rgba(228,66,62,.6);"></div>
<div class="r" style="left:1.7px;top:158.8px;width:36.2px;height:27.5px;border:2.9px solid #e4423e;box-shadow:0 0 2.2px 0.3px rgba(228,66,62,.75), inset 0 0 2.2px 0.3px rgba(228,66,62,.6);"></div>
<div class="r" style="left:1.7px;top:190px;width:36.2px;height:27.5px;border:2.9px solid #e4423e;box-shadow:0 0 2.2px 0.3px rgba(228,66,62,.75), inset 0 0 2.2px 0.3px rgba(228,66,62,.6);"></div>
<div class="r" style="left:1.7px;top:221px;width:36.2px;height:28.4px;border:2.9px solid #e4423e;box-shadow:0 0 2.2px 0.3px rgba(228,66,62,.75), inset 0 0 2.2px 0.3px rgba(228,66,62,.6);"></div>
<svg class="r" style="left:0px;top:0px;" width="300" height="300" viewBox="0 0 300 300"><g style="filter:drop-shadow(0 0 1.2px rgba(224,58,54,.8));"><path d="M91.8 130.4 L48.9 138.5" stroke="#e4423e" stroke-width="1.45"/><polygon points="37.6,140.6 49.8,132.6 51.9,143.6" fill="#e4423e"/><path d="M91.8 172.5 L49.1 172.5" stroke="#e4423e" stroke-width="1.45"/><polygon points="37.6,172.5 51.1,166.9 51.1,178.1" fill="#e4423e"/><path d="M91.8 213.0 L49.0 206.0" stroke="#e4423e" stroke-width="1.45"/><polygon points="37.6,204.2 51.8,200.8 50.0,211.9" fill="#e4423e"/><path d="M91.8 256.2 L48.4 240.5" stroke="#e4423e" stroke-width="1.45"/><polygon points="37.6,236.6 52.2,235.9 48.4,246.5" fill="#e4423e"/></g></svg>
<span class="t" style="left:106.10px;top:121.90px;font-size:17px;line-height:20.40px;color:#cc2c28;transform:scaleX(1.0237);text-shadow:0 0 2px rgba(216,48,44,.55);">Berichtsansicht</span>
<span class="t" style="left:106.10px;top:163.60px;font-size:17px;line-height:20.40px;color:#cc2c28;transform:scaleX(1.0214);text-shadow:0 0 2px rgba(216,48,44,.55);">Tabellenansicht</span>
<span class="t" style="left:106.10px;top:203.90px;font-size:17px;line-height:20.40px;color:#cc2c28;transform:scaleX(1.0217);text-shadow:0 0 2px rgba(216,48,44,.55);">Modellansicht</span>
<span class="t" style="left:106.10px;top:250.10px;font-size:17px;line-height:20.40px;color:#cc2c28;transform:scaleX(1.0198);text-shadow:0 0 2px rgba(216,48,44,.55);">DAX-Abfrage-Editor</span>
</body></html>
